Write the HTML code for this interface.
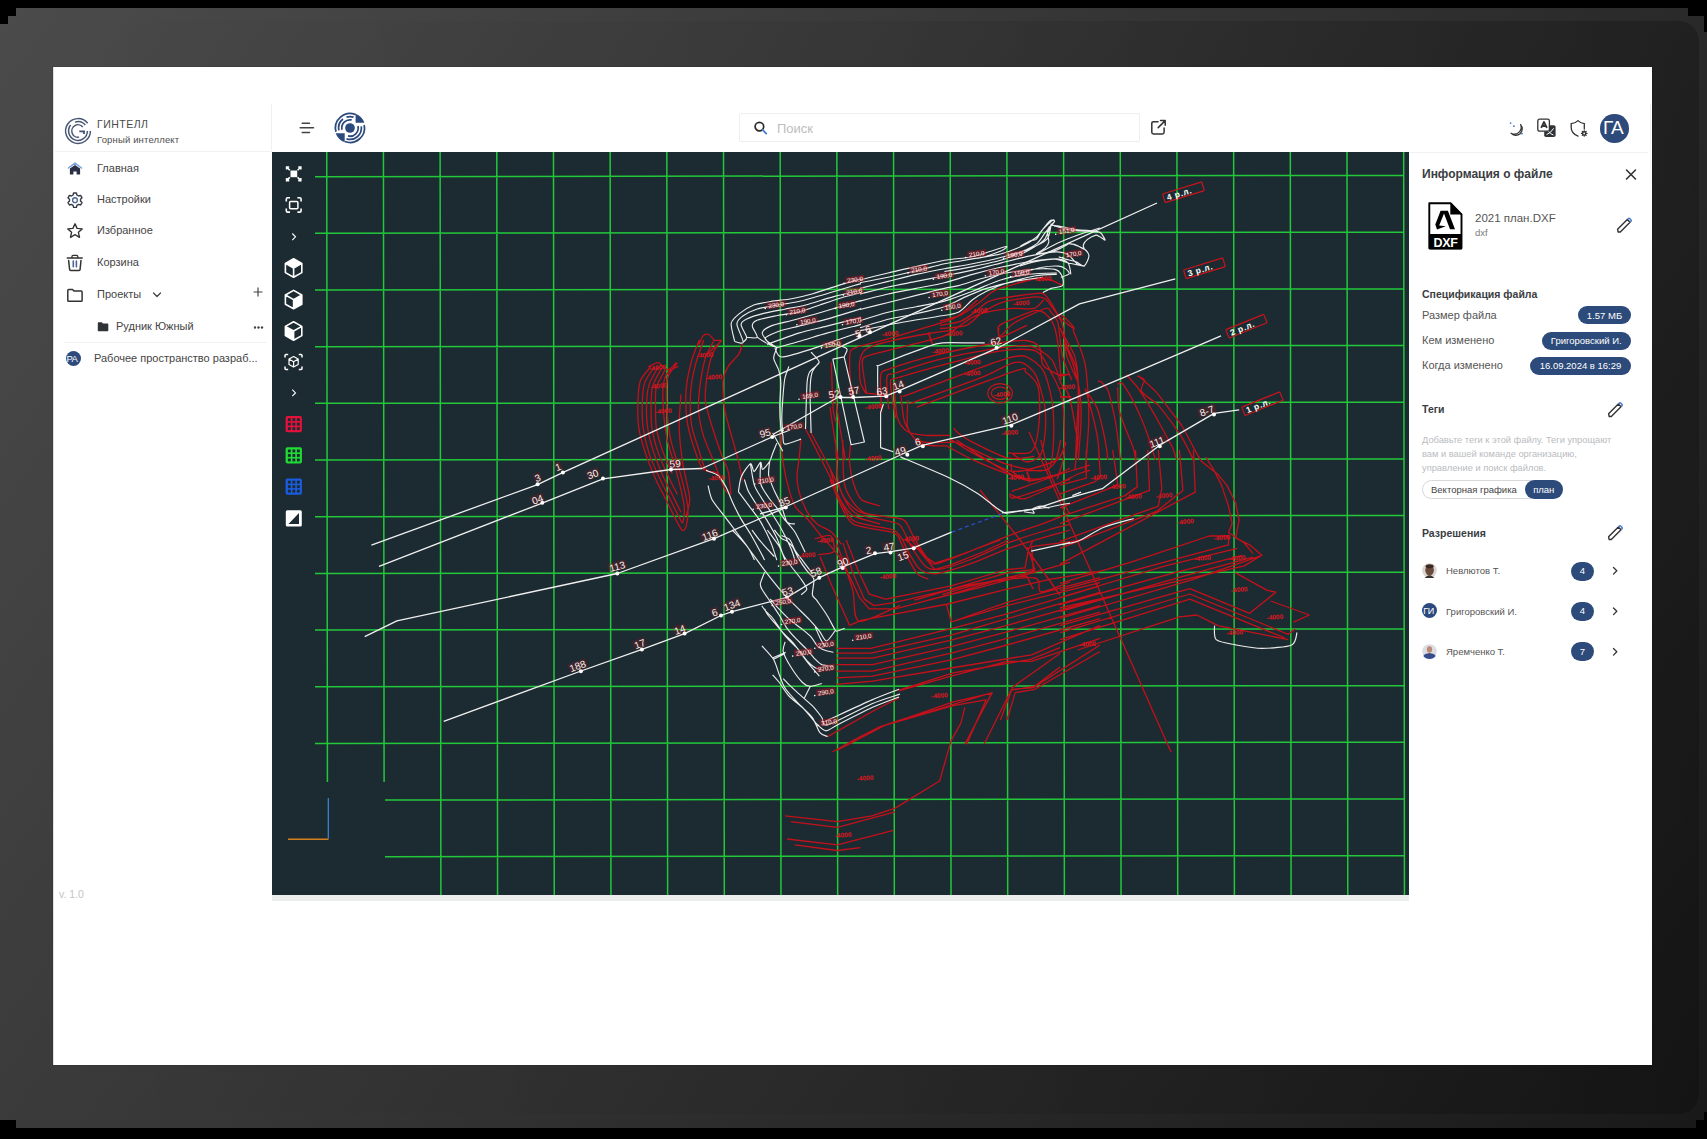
<!DOCTYPE html>
<html><head><meta charset="utf-8">
<style>
*{margin:0;padding:0;box-sizing:border-box}
html,body{width:1707px;height:1139px;overflow:hidden;background:#000;font-family:"Liberation Sans",sans-serif;position:relative}
#frame{position:absolute;left:0;top:0;width:1707px;height:1139px;background:linear-gradient(126.3deg,#4b4b4b 0%,#191919 100%);clip-path:polygon(16px 8px,1688px 8px,1688px 16px,1704px 16px,1704px 32px,1707px 32px,1707px 1112px,1704px 1112px,1704px 1120px,1696px 1120px,1696px 1128px,16px 1128px,16px 1120px,0 1120px,0 24px,8px 24px,8px 16px,16px 16px)}
#finner{position:absolute;left:8px;top:21px;width:1691px;height:1093px;border-radius:20px;background:linear-gradient(90deg,rgba(0,0,0,0) 0%,rgba(0,0,0,.05) 50%,rgba(0,0,0,.22) 100%)}
#screen{position:absolute;left:53px;top:67px;width:1599px;height:998px;background:#fff;box-shadow:0 0 0 1px rgba(0,0,0,.08),inset 1px 0 0 rgba(0,0,0,.12)}
.a{position:absolute}
.t{position:absolute;white-space:nowrap;line-height:1}
svg{position:absolute;overflow:visible}
</style></head><body>
<div id="frame"></div><div id="finner"></div>
<div id="screen"></div>
<!-- sidebar -->
<div class="a" style="left:55px;top:151px;width:216px;height:1px;background:#f0f1f2"></div>
<div class="a" style="left:271px;top:104px;width:1px;height:48px;background:#f0f1f2"></div>
<svg style="left:63.9px;top:117.3px" width="28" height="28" viewBox="0 0 28 28" fill="none" stroke="#475572" stroke-width="1.45" stroke-linecap="butt">
 <path d="M23.68 6.25A12.4 12.4 0 1 0 26.40 14.00M10.99 5.10A9.4 9.4 0 0 1 21.31 8.08M6.69 8.08A9.4 9.4 0 1 0 23.40 14.00M18.78 10.05A6.2 6.2 0 1 0 15.12 20.10"/>
 <path d="M15.3 14.4H21 M19.9 14.4V17" stroke-width="1.9"/>
</svg>
<div class="t" style="left:97px;top:119px;font-size:10.5px;color:#4a4a4a;letter-spacing:0.5px">ГИНТЕЛЛ</div>
<div class="t" style="left:97px;top:135px;font-size:9.5px;color:#4e4e4e;letter-spacing:0.15px">Горный интеллект</div>
<svg style="left:66px;top:161px" width="18" height="16" viewBox="0 0 18 16">
 <path d="M2.4 7 L9 2.1 L15.6 7" fill="none" stroke="#7aa2e0" stroke-width="1.5" stroke-linejoin="round" stroke-linecap="round"/>
 <path d="M3.9 7.6 L9 3.9 L14.1 7.6 V13.6 H10.6 V10.4 H7.4 V13.6 H3.9 Z" fill="#2a2f45"/>
</svg>
<svg style="left:66px;top:191px" width="18" height="18" viewBox="0 0 18 18" fill="none" stroke="#333a44" stroke-width="1.4" stroke-linejoin="round">
 <path d="M7.6 2.3 H10.4 L10.9 4.3 L12.6 5.3 L14.6 4.7 L16 7.1 L14.5 8.6 V10.4 L16 11.9 L14.6 14.3 L12.6 13.7 L10.9 14.7 L10.4 16.7 H7.6 L7.1 14.7 L5.4 13.7 L3.4 14.3 L2 11.9 L3.5 10.4 V8.6 L2 7.1 L3.4 4.7 L5.4 5.3 L7.1 4.3 Z" transform="translate(0,-0.3)"/>
 <circle cx="9" cy="9.2" r="2.4" stroke="#4f6a94"/>
</svg>
<svg style="left:66px;top:222px" width="18" height="18" viewBox="0 0 18 18" fill="none" stroke="#333" stroke-width="1.4" stroke-linejoin="round">
 <path d="M9 1.8 L11.1 6.4 L16.2 6.9 L12.4 10.3 L13.5 15.3 L9 12.7 L4.5 15.3 L5.6 10.3 L1.8 6.9 L6.9 6.4 Z"/>
</svg>
<svg style="left:66px;top:254px" width="18" height="18" viewBox="0 0 18 18" fill="none" stroke="#333" stroke-width="1.5" stroke-linecap="round" stroke-linejoin="round">
 <path d="M1.3 3.9 H16.2"/>
 <path d="M6 3.7 V2.5 Q6 1.3 7.2 1.3 H10.6 Q11.8 1.3 11.8 2.5 V3.7" stroke-width="1.3"/>
 <path d="M2.6 6.4 L3.6 15.3 Q3.8 16.6 5.1 16.6 H12.6 Q13.9 16.6 14.1 15.3 L15 6.4"/>
 <path d="M7.3 7.1 V12.8 M10.4 7.1 V12.8" stroke="#4d6592" stroke-width="1.6"/>
</svg>
<svg style="left:66px;top:288px" width="18" height="15" viewBox="0 0 18 15" fill="none" stroke="#333" stroke-width="1.5" stroke-linejoin="round">
 <path d="M1.8 2.4 Q1.8 1.5 2.7 1.5 H6.5 L8.2 3.1 H15.2 Q16.1 3.1 16.1 4 V12.4 Q16.1 13.3 15.2 13.3 H2.7 Q1.8 13.3 1.8 12.4 Z"/>
</svg>
<div class="t" style="left:97px;top:163px;font-size:11px;color:#444">Главная</div>
<div class="t" style="left:97px;top:194px;font-size:11px;color:#444">Настройки</div>
<div class="t" style="left:97px;top:225px;font-size:11px;color:#444">Избранное</div>
<div class="t" style="left:97px;top:257px;font-size:11px;color:#444">Корзина</div>
<div class="t" style="left:97px;top:289px;font-size:11px;color:#444">Проекты</div>
<svg style="left:152px;top:291px" width="10" height="8" viewBox="0 0 10 8" fill="none" stroke="#444" stroke-width="1.3" stroke-linecap="round" stroke-linejoin="round"><path d="M1.5 2 L5 5.5 L8.5 2"/></svg>
<svg style="left:252px;top:286px" width="12" height="12" viewBox="0 0 12 12" fill="none" stroke="#444" stroke-width="1.2"><path d="M6 1.5 V10.5 M1.5 6 H10.5"/></svg>
<svg style="left:97px;top:321px" width="12" height="11" viewBox="0 0 12 11"><path d="M0.8 2 Q0.8 1.3 1.5 1.3 H4.8 L6 2.5 H10.6 Q11.3 2.5 11.3 3.2 V9.5 Q11.3 10.2 10.6 10.2 H1.5 Q0.8 10.2 0.8 9.5 Z" fill="#2f3236"/></svg>
<div class="t" style="left:116px;top:321px;font-size:11px;color:#444">Рудник Южный</div>
<svg style="left:253px;top:325px" width="12" height="5" viewBox="0 0 12 5" fill="#444"><circle cx="2" cy="2.5" r="1.2"/><circle cx="5.5" cy="2.5" r="1.2"/><circle cx="9" cy="2.5" r="1.2"/></svg>
<div class="a" style="left:64px;top:342px;width:203px;height:1px;background:#f0f1f2"></div>
<div class="a" style="left:65.5px;top:350.5px;width:15.5px;height:15.5px;border-radius:50%;background:#2c4a7e"></div>
<div class="t" style="left:66.5px;top:354px;font-size:9.5px;color:#fff;letter-spacing:-0.6px">РА</div>
<div class="t" style="left:94px;top:353px;font-size:11px;color:#444">Рабочее пространство разраб...</div>
<div class="t" style="left:59px;top:889px;font-size:10.5px;color:#c4c4c4">v. 1.0</div>
<!-- topbar -->
<svg style="left:298px;top:120px" width="18" height="16" viewBox="0 0 18 16" stroke="#444" stroke-width="1.5" stroke-linecap="round"><path d="M4.2 3.3 H11.5 M2.2 7.7 H15.5 M4.2 12.4 H11.5"/></svg>
<svg style="left:334.4px;top:111.8px" width="32" height="32" viewBox="0 0 32 32" fill="none" stroke="#2c4a7e" stroke-width="1.75">
 <path d="M21.6 10.7V1.76A15.3 15.3 0 0 1 30.35 10.7Z M10.7 21.3V30.35A15.3 15.3 0 0 1 1.65 21.3Z" fill="#2c4a7e" stroke="none"/>
 <path d="M21.67 2.65A14.5 14.5 0 0 0 1.99 19.75M30.18 12.99A14.5 14.5 0 0 1 10.80 29.54M8.98 7.02A11.4 11.4 0 0 0 4.85 18.37M12.48 5.16A11.4 11.4 0 0 1 19.52 5.16M27.29 14.41A11.4 11.4 0 0 1 12.48 26.84M17.70 7.98A8.2 8.2 0 0 0 7.98 17.70M23.96 14.02A8.2 8.2 0 0 1 14.02 23.96"/>
 <circle cx="16" cy="16" r="4.85" fill="#2c4a7e" stroke="none"/>
</svg>
<div class="a" style="left:739px;top:113px;width:401px;height:29px;border:1px solid #eeeeee;border-radius:2px"></div>
<svg style="left:752px;top:120px" width="18" height="16" viewBox="0 0 18 16" fill="none" stroke-linecap="round"><circle cx="7.4" cy="6.6" r="4.3" stroke="#2b2b2b" stroke-width="1.7"/><path d="M10.8 10 L14.2 13.6" stroke="#3e7bd6" stroke-width="1.8"/></svg>
<div class="t" style="left:777px;top:122px;font-size:13px;color:#bdbdbd">Поиск</div>
<svg style="left:1150px;top:119px" width="17" height="17" viewBox="0 0 17 17" fill="none" stroke="#333" stroke-width="1.5" stroke-linecap="round" stroke-linejoin="round"><path d="M8 2.7 H3.5 Q1.8 2.7 1.8 4.4 V13.3 Q1.8 15 3.5 15 H12.4 Q14.1 15 14.1 13.3 V9"/><path d="M8.2 8.6 L15.2 1.6 M10.5 1.6 H15.2 V6.3"/></svg>
<svg style="left:1507px;top:120px" width="18" height="17" viewBox="0 0 18 17" fill="none"><path d="M13.6 4.6 A6 6 0 0 1 4 13.2 A6.8 6.8 0 0 0 13.6 4.6 Z" stroke="#333" stroke-width="1.2" stroke-linejoin="round"/><circle cx="3.6" cy="3.1" r="0.9" fill="#4a7bd0"/><circle cx="6.9" cy="6.2" r="0.9" fill="#4a7bd0"/><circle cx="15" cy="13.7" r="0.9" fill="#4a7bd0"/></svg>
<svg style="left:1536px;top:118px" width="22" height="21" viewBox="0 0 22 21"><rect x="8.2" y="7.3" width="11.4" height="11.7" rx="1.8" fill="#2f3338"/><path d="M10.6 16.6 Q14.6 15.2 17.6 10.4 M12.2 13 Q14.8 16.4 17.4 17" stroke="#fff" stroke-width="1" fill="none"/><rect x="1.8" y="1.2" width="11.6" height="12" rx="1.8" fill="#fff" stroke="#333" stroke-width="1.3"/><path d="M5.2 9.9 L8 4 L10.9 9.9 M6.2 8 H9.9" stroke="#333" stroke-width="1.8" fill="none" stroke-linejoin="round"/></svg>
<svg style="left:1569px;top:119px" width="20" height="19" viewBox="0 0 20 19" fill="none" stroke="#333" stroke-width="1.3" stroke-linecap="round"><path d="M15.3 10 V4.6 Q11.6 4.2 9 1.6 Q6.4 4.2 2.2 4.6 V8.6 Q2.2 14.6 9 17.2"/><circle cx="15.2" cy="14.4" r="1.6" stroke-width="1.4"/><path d="M15.2 11.6 V12.4 M15.2 16.4 V17.2 M12.4 14.4 H13.2 M17.2 14.4 H18 M13.2 12.4 L13.8 13 M16.6 15.8 L17.2 16.4 M17.2 12.4 L16.6 13 M13.8 15.8 L13.2 16.4" stroke-width="1.1"/></svg>
<div class="a" style="left:1600px;top:114px;width:28.5px;height:28.5px;border-radius:50%;background:#2d4a7a"></div>
<div class="t" style="left:1603px;top:118px;font-size:19px;color:#fff;letter-spacing:-1px">ГА</div>
<div class="a" style="left:1409px;top:152px;width:239px;height:1px;background:#f0f1f2"></div>
<div class="a" style="left:1650px;top:104px;width:1px;height:100px;background:linear-gradient(#eef0f1,rgba(238,240,241,0))"></div>
<!-- canvas -->
<div class="a" style="left:272px;top:152px;width:1137px;height:743px;background:#1c2b31"></div>
<div class="a" style="left:272px;top:895px;width:1137px;height:6px;background:#eceeee"></div>
<svg width="1707" height="1139" style="left:0;top:0" viewBox="0 0 1707 1139"><defs><clipPath id="cv"><rect x="272" y="152" width="1137" height="743"/></clipPath></defs><g clip-path="url(#cv)"><path d="M326.75 152L327.41 782M383.43 152L384.09 782M440.11 152L440.89 895M496.79 152L497.57 895M553.47 152L554.25 895M610.15 152L610.93 895M666.83 152L667.61 895M723.51 152L724.29 895M780.19 152L780.97 895M836.87 152L837.65 895M893.55 152L894.33 895M950.23 152L951.01 895M1006.91 152L1007.69 895M1063.59 152L1064.37 895M1120.27 152L1121.05 895M1176.95 152L1177.73 895M1233.63 152L1234.41 895M1290.31 152L1291.09 895M1346.99 152L1347.77 895M1403.67 152L1404.45 895M315 176.64L1404 175.39M315 233.32L1404 232.07M315 290.00L1404 288.75M315 346.68L1404 345.43M315 403.36L1404 402.11M315 460.04L1404 458.79M315 516.72L1404 515.47M315 573.40L1404 572.15M315 630.08L1404 628.83M315 686.76L1404 685.51M315 743.44L1404 742.19M385 800.04L1404 798.87M385 856.72L1404 855.55" stroke="#22c83a" stroke-width="1.5" fill="none"/><path d="M651.1 366.3 C649.7 368.2 642.3 375.7 640.5 380.4 C638.8 385.1 638.1 395.1 637.9 401.5 C637.7 407.8 637.7 420.8 638.8 427.8 C639.8 434.8 643.5 447.1 645.8 454.1 C648.1 461.2 653.5 474.2 656.3 480.5 C659.1 486.8 664.1 495.9 666.9 501.5 C669.7 507.2 675.3 518.8 677.4 522.6 C679.5 526.5 681.5 530.0 682.7 530.5 C683.8 531.0 685.5 529.1 686.2 526.1 C686.9 523.2 688.2 513.5 687.9 508.6 C687.7 503.7 685.8 495.3 684.4 489.3 C683.0 483.2 679.3 469.7 677.4 462.9 C675.5 456.1 671.8 445.4 670.4 438.3 C669.0 431.3 667.3 418.0 666.9 410.2 C666.4 402.5 666.2 385.8 666.9 380.4 C667.6 375.0 670.7 372.2 672.1 369.9 C673.5 367.5 676.7 363.8 677.4 362.8M654.6 366.3 C653.3 368.4 646.6 377.5 644.9 382.1 C643.3 386.8 642.5 395.4 642.3 401.5 C642.1 407.5 642.2 420.8 643.2 427.8 C644.1 434.8 647.1 447.3 649.3 454.1 C651.5 460.9 657.0 472.6 659.9 478.7 C662.7 484.8 667.8 494.6 670.4 499.8 C673.0 504.9 677.5 514.3 679.2 517.3 C680.8 520.4 682.0 523.8 682.7 522.6 C683.4 521.4 684.7 513.0 684.4 508.6 C684.2 504.1 682.3 495.3 680.9 489.3 C679.5 483.2 675.8 469.7 673.9 462.9 C672.0 456.1 668.3 445.4 666.9 438.3 C665.5 431.3 663.8 417.5 663.4 410.2 C662.9 403.0 662.7 389.0 663.4 383.9 C664.1 378.7 666.6 373.9 668.6 371.6 C670.6 369.3 677.0 367.0 678.3 366.3M658.1 367.2 C656.9 369.4 650.8 379.3 649.3 383.9 C647.8 388.5 646.9 395.6 646.7 401.5 C646.4 407.3 646.6 421.0 647.6 427.8 C648.5 434.6 651.6 445.8 653.7 452.4 C655.8 458.9 660.7 470.9 663.4 477.0 C666.1 483.0 671.6 493.4 673.9 498.0 C676.2 502.7 680.0 510.2 680.9 512.1M661.6 368.1 C660.4 370.4 654.2 381.0 652.8 385.7 C651.4 390.3 651.2 397.6 651.1 403.2 C651.0 408.8 651.0 421.2 651.9 427.8 C652.9 434.4 656.0 446.1 658.1 452.4 C660.2 458.7 665.2 469.6 667.8 475.2 C670.3 480.8 676.1 491.9 677.4 494.5M665.1 369.9 C663.9 372.2 657.6 382.7 656.3 387.4 C655.1 392.1 655.5 399.6 655.5 405.0 C655.5 410.4 655.4 421.7 656.3 427.8 C657.3 433.9 660.4 444.5 662.5 450.6 C664.6 456.7 670.9 470.4 672.1 473.5M680.9 394.4 C680.7 398.9 678.9 418.7 679.2 427.8 C679.4 436.9 681.3 453.5 682.7 462.9 C684.1 472.3 689.2 491.0 689.7 498.0 C690.2 505.1 686.7 513.3 686.2 515.6M703.7 340.0 C702.6 343.5 696.7 359.3 695.0 366.3 C693.2 373.4 691.0 385.0 690.6 392.7 C690.1 400.4 690.4 416.8 691.5 424.3 C692.5 431.8 696.6 442.8 698.5 448.9 C700.4 455.0 703.6 466.9 705.5 469.9 C707.4 473.0 710.9 471.2 712.5 471.7 C714.2 472.2 717.1 473.2 717.8 473.5M714.3 340.0 C713.1 342.3 707.4 351.7 705.5 357.6 C703.6 363.4 701.2 376.9 700.2 383.9 C699.3 390.9 698.0 403.2 698.5 410.2 C698.9 417.3 701.6 429.6 703.7 436.6 C705.9 443.6 711.5 455.9 714.3 462.9 C717.1 469.9 722.7 485.0 724.8 489.3 C726.9 493.5 729.4 493.8 730.1 494.5M721.3 340.0 C720.1 341.9 714.4 349.4 712.5 354.0 C710.7 358.7 708.2 368.8 707.3 375.1 C706.3 381.4 704.8 394.4 705.5 401.5 C706.2 408.5 710.4 420.8 712.5 427.8 C714.6 434.8 719.2 448.3 721.3 454.1 C723.4 460.0 727.0 466.3 728.3 471.7 C729.6 477.1 730.6 491.5 731.0 494.5M742.4 343.5 C741.9 344.9 740.7 351.0 738.9 354.0 C737.0 357.1 730.4 362.8 728.3 366.3 C726.2 369.9 723.5 374.5 723.1 380.4 C722.6 386.2 723.6 402.7 724.8 410.2 C726.0 417.7 730.0 429.6 731.8 436.6 C733.7 443.6 737.5 457.1 738.9 462.9 C740.3 468.8 741.9 478.1 742.4 480.5M699.4 340.0 C698.3 342.8 693.2 354.5 691.5 361.1 C689.7 367.6 686.8 381.2 686.2 389.2 C685.6 397.1 686.1 413.3 687.1 420.8 C688.0 428.3 691.2 439.0 693.2 445.4 C695.2 451.7 700.1 464.9 702.0 468.2 C703.9 471.5 706.6 469.7 707.3 469.9M648.3 366.9 C649.6 366.3 655.5 362.3 658.1 362.6 C660.7 363.0 665.5 369.7 668.0 369.7 C670.4 369.7 675.3 363.6 676.4 362.6M698.9 344.4 C699.5 343.2 701.8 337.2 703.1 335.9 C704.4 334.6 707.2 334.0 708.7 334.5 C710.2 335.1 712.7 339.3 714.4 340.1 C716.0 341.0 721.4 339.9 721.4 340.8 C721.4 341.8 716.4 345.2 714.4 347.2 C712.3 349.1 707.0 354.5 705.9 355.6M780.0 431.6 C780.4 435.8 781.9 455.2 783.2 463.2 C784.4 471.2 787.8 485.7 789.5 491.6 C791.2 497.5 793.3 503.6 795.8 507.4 C798.3 511.2 805.1 516.2 808.4 520.0 C811.8 523.8 816.8 530.7 821.1 535.8 C825.3 540.8 835.8 550.7 840.0 557.9 C844.2 565.1 850.1 581.1 852.6 589.5 C855.2 597.9 852.6 618.9 858.9 621.1 C865.3 623.2 894.5 607.4 900.0 605.3M814.7 538.9 C816.8 538.5 828.0 534.1 830.5 535.8 C833.1 537.5 835.4 549.1 833.7 551.6 C832.0 554.1 820.0 554.3 817.9 554.7M851.1 398.4 C850.9 392.8 849.1 363.0 849.7 356.2 C850.2 349.5 850.4 350.1 855.3 347.8 C860.2 345.6 876.5 342.2 886.2 339.4 C896.0 336.6 919.4 329.5 928.4 326.7 C937.4 323.9 948.5 320.7 953.7 318.3 C959.0 315.8 964.6 310.9 967.8 308.4 C971.0 306.0 976.3 301.1 977.6 300.0M866.6 394.2 C866.0 390.1 862.3 368.3 862.3 363.3 C862.3 358.2 862.4 358.1 866.6 356.2 C870.7 354.4 883.1 351.8 893.3 349.2 C903.4 346.6 934.0 339.4 942.5 336.6 C950.9 333.7 952.8 330.6 956.5 328.1 C960.3 325.7 966.8 320.3 970.6 318.3 C974.3 316.2 979.0 314.0 984.7 312.7 C990.3 311.3 1006.2 309.0 1012.8 308.4 C1019.3 307.9 1029.7 309.6 1033.9 308.4 C1038.0 307.3 1042.4 301.1 1043.7 300.0M998.7 328.1 C998.7 329.1 998.2 334.0 998.7 335.1 C999.3 336.3 999.2 337.9 1002.9 336.6 C1006.7 335.2 1023.6 326.8 1026.8 325.3M928.4 332.3 L931.2 342.2M830.0 406.9 C830.4 409.5 831.7 419.4 832.8 426.5 C833.9 433.6 837.7 455.7 838.4 460.1M835.6 398.4 C836.2 402.2 838.5 418.3 839.8 426.5 C841.2 434.8 844.7 455.7 845.5 460.1M865.8 393.2 C865.1 391.8 861.4 386.9 860.5 382.7 C859.7 378.5 859.0 366.0 859.7 361.6 C860.4 357.2 862.4 351.9 865.8 349.3 C869.2 346.7 876.7 344.4 885.1 342.3 C893.5 340.2 919.6 335.1 929.0 333.5 C938.4 331.9 951.8 330.5 955.3 330.0M865.8 393.2 L885.1 395.0M881.6 412.5 C881.5 407.6 879.6 381.5 880.7 375.6 C881.9 369.8 882.8 371.4 890.4 368.6 C898.0 365.8 924.4 357.9 937.8 354.6 C951.1 351.3 978.7 345.9 990.4 344.0 C1002.2 342.2 1019.0 340.1 1025.6 340.5 C1032.1 341.0 1037.3 344.3 1039.6 347.6 C1041.9 350.8 1040.3 361.4 1043.1 365.1 C1045.9 368.9 1057.2 374.5 1060.7 375.6 C1064.2 376.8 1068.3 374.1 1069.5 373.9M888.6 409.0 C888.4 404.8 885.9 382.2 886.9 377.4 C887.8 372.6 888.9 375.4 895.6 373.0 C902.4 370.7 925.1 363.0 937.8 359.8 C950.4 356.7 978.3 351.2 990.4 349.3 C1002.6 347.4 1020.9 344.4 1029.1 345.8 C1037.3 347.2 1047.7 354.9 1051.9 359.8 C1056.1 364.8 1058.3 377.8 1060.7 382.7 C1063.0 387.6 1067.1 388.5 1069.5 396.7 C1071.8 404.9 1077.1 437.8 1078.2 444.1M895.6 417.8 C894.9 413.1 889.9 388.1 890.4 382.7 C890.8 377.3 890.5 380.2 899.2 377.4 C907.8 374.6 942.0 365.1 955.3 361.6 C968.7 358.1 988.5 352.5 999.2 351.1 C1010.0 349.7 1029.1 348.0 1036.1 351.1 C1043.1 354.1 1048.4 367.3 1051.9 373.9 C1055.4 380.4 1060.8 389.7 1062.4 400.2 C1064.1 410.8 1064.9 442.4 1064.2 452.9 C1063.5 463.4 1058.1 475.7 1057.2 479.2M902.7 396.7 C912.0 393.2 958.8 375.5 972.9 370.4 C986.9 365.2 1001.0 360.0 1008.0 358.1 C1015.0 356.2 1020.9 354.7 1025.6 356.3 C1030.2 358.0 1039.6 364.5 1043.1 370.4 C1046.6 376.2 1050.5 391.6 1051.9 400.2 C1053.3 408.9 1053.9 426.4 1053.7 435.3 C1053.4 444.2 1052.0 462.3 1050.1 466.9 C1048.3 471.6 1042.9 470.0 1039.6 470.4 C1036.3 470.9 1027.4 470.4 1025.6 470.4M909.7 403.7 C919.3 400.2 968.1 382.8 981.7 377.4 C995.2 372.0 1005.9 365.2 1011.5 363.4 C1017.1 361.5 1020.5 361.7 1023.8 363.4 C1027.1 365.0 1033.3 369.8 1036.1 375.6 C1038.9 381.5 1043.7 399.3 1044.9 407.2 C1046.0 415.2 1045.6 428.8 1044.9 435.3 C1044.2 441.9 1042.2 452.9 1039.6 456.4 C1037.0 459.9 1029.3 462.1 1025.6 461.7 C1021.8 461.2 1013.4 454.1 1011.5 452.9M916.7 407.2 C930.1 402.3 1002.3 375.1 1016.8 370.4 C1031.3 365.7 1022.8 370.0 1025.6 372.1 C1028.4 374.2 1036.0 380.6 1037.9 386.2 C1039.7 391.8 1039.8 406.8 1039.6 414.3 C1039.4 421.8 1037.5 437.2 1036.1 442.4 C1034.7 447.5 1032.8 451.5 1029.1 452.9 C1025.3 454.3 1010.8 452.9 1008.0 452.9M893.9 382.7 C894.4 387.4 895.5 411.2 897.4 417.8 C899.3 424.3 904.2 429.5 907.9 431.8 C911.7 434.2 919.9 434.9 925.5 435.3 C931.1 435.8 946.8 435.3 950.1 435.3M900.9 395.0 C901.4 398.5 902.6 415.4 904.4 421.3 C906.3 427.1 911.9 436.0 915.0 438.8 C918.0 441.7 922.1 441.9 927.2 442.4 C932.4 442.8 950.1 442.4 953.6 442.4M907.9 400.2 C907.9 404.0 906.1 422.5 907.9 428.3 C909.8 434.2 916.8 441.8 922.0 444.1 C927.1 446.5 943.3 445.6 946.6 445.9M953.6 428.3 C954.3 429.0 956.3 431.7 958.8 433.6 C961.4 435.5 966.3 439.1 972.9 442.4 C979.4 445.6 999.8 456.3 1008.0 458.2 C1016.2 460.0 1030.8 456.6 1034.3 456.4M950.1 438.8 C952.6 440.5 961.7 446.9 969.4 451.1 C977.1 455.4 1000.5 467.9 1008.0 470.4 C1015.5 473.0 1023.2 470.4 1025.6 470.4M946.6 445.9 C950.1 447.7 964.0 455.9 972.9 459.9 C981.8 463.9 1005.1 473.1 1013.3 475.7 C1021.5 478.3 1029.2 479.2 1034.3 479.2 C1039.5 479.2 1049.6 476.2 1051.9 475.7M1011.5 495.0 C1013.4 495.5 1019.0 500.2 1025.6 498.5 C1032.1 496.9 1053.7 486.0 1060.7 482.7 C1067.7 479.5 1074.3 475.6 1078.2 474.0 C1082.1 472.3 1088.4 470.9 1090.0 470.4M1011.5 491.5 C1018.1 489.2 1050.2 477.5 1060.7 474.0 C1071.1 470.4 1086.1 466.4 1090.0 465.2M1027.3 470.4 L1029.1 482.7M1025.6 470.4 C1029.8 469.0 1051.8 463.7 1057.2 459.9 C1062.5 456.2 1064.8 444.7 1065.9 442.4M1060.7 330.0 C1062.5 333.5 1072.4 349.3 1074.7 356.3 C1077.1 363.4 1077.8 372.1 1078.2 382.7 C1078.7 393.2 1078.7 423.6 1078.2 435.3 C1077.8 447.0 1075.2 465.8 1074.7 470.4M1073.0 330.0 C1074.6 334.7 1083.1 353.4 1085.3 365.1 C1087.4 376.8 1088.8 403.7 1088.8 417.8 C1088.8 431.8 1085.7 463.4 1085.3 470.4M929.0 333.5 L932.5 344.0M1060.7 396.7 L1071.2 396.7M842.7 440.0 C842.8 445.6 842.9 474.3 844.1 482.2 C845.2 490.1 848.3 494.9 851.1 499.1 C853.9 503.2 858.6 510.5 865.1 513.1 C871.7 515.7 894.7 517.2 900.3 518.7 C905.9 520.2 905.5 521.7 907.3 524.4 C909.2 527.0 911.5 533.7 914.4 538.4 C917.2 543.1 925.4 556.1 928.4 559.5 C931.4 562.9 931.2 564.9 936.9 563.7 C942.5 562.6 960.5 555.0 970.6 551.1 C980.7 547.1 1003.4 537.8 1012.8 534.2 C1022.1 530.6 1033.3 527.2 1040.9 524.4 C1048.5 521.5 1066.1 514.6 1070.0 513.1M835.6 440.0 C836.0 445.6 836.9 473.7 838.4 482.2 C839.9 490.6 844.2 499.0 846.9 503.3 C849.5 507.6 851.6 511.9 858.1 514.5 C864.7 517.1 890.1 520.9 896.1 523.0 C902.1 525.0 901.0 526.8 903.1 530.0 C905.2 533.2 908.5 542.0 911.5 546.9 C914.5 551.7 921.9 563.5 925.6 566.5 C929.4 569.5 933.7 570.3 939.7 569.3 C945.7 568.4 960.8 563.3 970.6 559.5 C980.3 555.8 1002.5 545.2 1012.8 541.2 C1023.1 537.3 1040.3 532.2 1047.9 530.0 C1055.6 527.7 1067.1 525.1 1070.0 524.4M830.0 468.1 C831.1 471.9 835.6 489.5 838.4 496.2 C841.2 503.0 847.5 515.0 851.1 518.7 C854.7 522.5 859.5 522.9 865.1 524.4 C870.8 525.9 888.4 528.1 893.3 530.0 C898.1 531.9 899.6 535.4 901.7 538.4 C903.8 541.4 906.3 548.4 908.7 552.5 C911.2 556.6 916.2 566.5 920.0 569.3 C923.7 572.2 930.1 574.3 936.9 573.6 C943.6 572.8 960.5 567.3 970.6 563.7 C980.7 560.2 999.5 551.4 1012.8 546.9 C1026.0 542.4 1062.4 532.2 1070.0 530.0M830.0 479.4 C831.5 482.9 838.1 500.1 841.2 506.1 C844.4 512.1 847.0 520.8 853.9 524.4 C860.8 527.9 887.1 530.5 893.3 532.8 C899.5 535.0 898.4 538.0 900.3 541.2 C902.2 544.4 905.1 552.4 907.3 556.7 C909.6 561.0 914.4 570.6 917.2 573.6 C920.0 576.6 926.9 578.4 928.4 579.2M949.5 440.0 C952.3 441.1 963.1 445.2 970.6 448.4 C978.1 451.6 996.4 460.9 1005.7 463.9 C1015.1 466.9 1034.3 471.1 1040.9 470.9 C1047.5 470.7 1052.3 466.6 1055.0 462.5 C1057.6 458.4 1059.8 443.0 1060.6 440.0M956.5 440.0 C959.3 441.9 970.9 449.7 977.6 454.1 C984.4 458.4 1000.2 468.8 1007.2 472.3 C1014.1 475.9 1023.3 480.4 1029.6 480.8 C1036.0 481.1 1049.6 476.8 1055.0 475.1 C1060.3 473.5 1068.0 469.1 1070.0 468.1M1010.0 493.4 C1010.7 494.0 1007.6 499.5 1015.6 497.6 C1023.6 495.8 1062.7 481.8 1070.0 479.4M1011.4 463.9 C1011.6 465.0 1010.3 470.1 1012.8 472.3 C1015.2 474.6 1027.8 480.8 1029.6 480.8 C1031.5 480.8 1027.2 473.5 1026.8 472.3M914.4 600.1 C921.9 598.1 954.7 587.8 970.6 584.8 C986.5 581.8 1024.5 576.8 1033.9 577.8 C1043.2 578.7 1036.1 591.3 1040.9 591.8 C1045.7 592.4 1066.1 583.3 1070.0 582.0M928.4 600.1 C935.9 598.3 965.8 591.3 984.7 586.2 C1003.5 581.2 1058.6 565.5 1070.0 562.3M1026.8 546.9 C1027.8 549.5 1033.5 563.2 1033.9 566.5 C1034.2 569.9 1038.1 569.5 1029.6 572.2 C1021.2 574.8 982.2 583.2 970.6 586.2 C959.0 589.2 946.2 593.5 942.5 594.7M1040.9 440.0 C1041.8 443.7 1045.1 460.2 1047.9 468.1 C1050.7 476.0 1059.2 493.1 1062.0 499.1 C1064.8 505.0 1068.1 511.2 1069.0 513.1M1060.0 314.1 C1061.1 315.0 1066.6 319.2 1068.4 321.1 C1070.3 323.0 1073.5 327.0 1074.1 328.1 C1074.6 329.2 1072.8 329.3 1072.7 329.5M1060.0 328.1 C1061.1 330.9 1066.2 343.6 1068.4 349.2 C1070.7 354.8 1075.6 363.7 1076.9 370.3 C1078.2 376.9 1078.3 390.9 1078.3 398.4 C1078.3 405.9 1077.2 418.3 1076.9 426.5 C1076.5 434.8 1075.7 455.7 1075.5 460.1M1064.2 342.2 C1065.3 345.0 1070.6 356.7 1072.7 363.3 C1074.7 369.8 1078.6 383.9 1079.7 391.4 C1080.8 398.9 1081.3 410.3 1081.1 419.5 C1080.9 428.7 1078.7 454.7 1078.3 460.1M1085.3 388.6 C1085.7 389.9 1087.0 394.3 1088.1 398.4 C1089.2 402.5 1092.4 413.9 1093.7 419.5 C1095.1 425.1 1097.2 435.2 1098.0 440.6 C1098.7 446.0 1099.2 457.5 1099.4 460.1M1098.0 381.5 C1098.3 381.5 1099.5 380.4 1100.8 381.5 C1102.1 382.7 1106.3 386.8 1107.8 390.0 C1109.3 393.2 1110.9 400.6 1112.0 405.4 C1113.1 410.3 1115.1 419.2 1116.2 426.5 C1117.4 433.8 1119.9 455.7 1120.5 460.1M1085.3 390.0 C1086.8 392.2 1094.3 402.0 1096.6 406.9 C1098.8 411.7 1100.9 421.1 1102.2 426.5 C1103.5 432.0 1105.6 443.1 1106.4 447.6 C1107.1 452.1 1107.6 458.5 1107.8 460.1M1117.6 384.4 C1118.2 384.2 1120.2 381.5 1121.9 383.0 C1123.6 384.5 1128.0 391.7 1130.3 395.6 C1132.5 399.5 1136.5 407.4 1138.7 412.5 C1141.0 417.5 1144.9 427.2 1147.2 433.6 C1149.4 439.9 1154.5 456.6 1155.6 460.1M1117.6 387.2 C1117.8 390.2 1118.1 404.4 1119.1 409.7 C1120.0 414.9 1122.8 421.5 1124.7 426.5 C1126.5 431.6 1131.6 443.1 1133.1 447.6 C1134.6 452.1 1135.5 458.5 1135.9 460.1M1126.1 374.5 C1127.6 376.2 1134.1 382.9 1137.3 387.2 C1140.5 391.5 1146.8 401.6 1150.0 406.9 C1153.2 412.1 1158.2 421.1 1161.2 426.5 C1164.2 432.0 1170.4 443.1 1172.5 447.6 C1174.5 452.1 1176.1 458.5 1176.7 460.1M1137.3 375.9 C1138.3 376.5 1143.8 378.1 1144.4 380.1 C1144.9 382.2 1139.7 388.0 1141.5 391.4 C1143.4 394.8 1154.3 401.1 1158.4 405.4 C1162.5 409.8 1169.1 419.0 1172.5 423.7 C1175.9 428.4 1180.9 435.7 1183.7 440.6 C1186.5 445.5 1192.3 457.5 1193.6 460.1M1138.7 375.9 C1141.0 378.0 1151.5 386.9 1155.6 391.4 C1159.7 395.9 1166.1 405.0 1169.7 409.7 C1173.2 414.4 1179.1 421.5 1182.3 426.5 C1185.5 431.6 1191.1 443.1 1193.6 447.6 C1196.0 452.1 1199.7 458.5 1200.6 460.1M1060.0 374.5 L1069.8 374.5M1060.0 397.0 L1071.2 397.0M980.0 490.0 C985.3 496.7 1009.3 526.0 1020.0 540.0 C1030.7 554.0 1054.7 587.7 1060.0 595.0M940.0 321.1 C942.8 320.2 956.2 317.0 961.1 314.8 C966.0 312.5 972.7 307.3 976.9 304.2 C981.1 301.1 989.2 293.8 992.7 291.6 C996.2 289.4 997.6 289.1 1003.2 287.4 C1008.8 285.7 1028.5 279.9 1034.8 279.0 C1041.1 278.0 1046.9 279.2 1050.6 280.0 C1054.2 280.9 1060.6 284.6 1062.2 285.3M940.0 325.3 C942.8 324.7 956.2 323.1 961.1 321.1 C966.0 319.1 973.4 313.1 976.9 310.6 C980.4 308.0 983.9 303.8 987.4 302.1 C990.9 300.4 996.9 299.0 1003.2 297.9 C1009.5 296.8 1029.5 294.3 1034.8 293.7 C1040.1 293.1 1041.1 292.6 1043.2 293.7 C1045.3 294.8 1048.6 299.3 1050.6 302.1 C1052.6 304.9 1055.9 312.0 1058.0 314.8 C1060.1 317.6 1064.3 321.4 1066.4 323.2 C1068.5 325.0 1072.8 327.8 1073.8 328.5M940.0 328.5 C943.5 328.0 960.7 327.4 966.3 325.3 C972.0 323.2 977.2 315.8 982.1 312.7 C987.0 309.6 996.2 304.2 1003.2 302.1 C1010.2 300.0 1029.2 297.3 1034.8 296.9 C1040.4 296.4 1042.8 297.3 1045.3 299.0 C1047.9 300.7 1051.6 306.6 1053.8 309.5 C1055.9 312.5 1059.7 317.9 1061.1 321.1 C1062.5 324.3 1063.6 329.2 1064.3 333.7 C1065.0 338.2 1064.7 348.6 1066.4 354.8 C1068.1 361.0 1075.5 376.6 1076.9 380.0M997.9 327.4 C998.1 328.5 998.3 335.0 999.0 335.8 C999.7 336.7 1001.2 335.4 1003.2 333.7 C1005.2 332.0 1008.1 326.6 1013.7 323.2 C1019.3 319.8 1040.4 310.0 1045.3 308.5 C1050.2 306.9 1048.9 309.6 1050.6 311.6 C1052.3 313.6 1056.4 317.4 1058.0 323.2 C1059.5 329.0 1060.4 347.2 1062.2 354.8 C1064.0 362.4 1070.4 376.6 1071.7 380.0M997.9 327.4 C998.6 326.8 998.3 325.4 1003.2 323.2 C1008.1 321.0 1029.2 311.8 1034.8 310.6 C1040.4 309.3 1042.8 311.8 1045.3 313.7 C1047.9 315.7 1052.1 321.2 1053.8 325.3 C1055.4 329.4 1057.0 337.0 1058.0 344.3 C1059.0 351.6 1060.7 375.2 1061.1 380.0M801.0 439.1 C800.7 441.8 799.5 454.4 799.0 459.3 C798.5 464.1 797.0 471.1 797.0 475.5 C797.0 479.8 797.6 486.8 799.0 491.6 C800.3 496.5 804.6 507.5 807.1 511.8 C809.5 516.1 813.9 521.2 817.2 523.9 C820.4 526.6 828.1 529.3 831.3 532.0 C834.5 534.7 840.1 542.5 841.4 544.1M805.5 429.0 C807.6 433.0 817.5 452.0 821.2 459.3 C824.9 466.6 830.6 477.9 833.3 483.5 C836.0 489.2 838.7 497.4 841.4 501.7 C844.1 506.0 848.4 512.9 853.5 515.9 C858.7 518.8 876.5 522.9 880.0 523.9M811.1 433.0 C813.0 436.5 821.8 452.6 825.3 459.3 C828.8 466.0 834.7 478.1 837.4 483.5 C840.1 488.9 842.5 495.9 845.5 499.7 C848.4 503.5 855.0 509.7 859.6 511.8 C864.2 514.0 877.3 515.3 880.0 515.9M831.3 362.3 C831.4 366.1 832.1 384.1 832.3 390.6 C832.6 397.1 832.8 406.5 833.3 410.8 C833.9 415.1 836.0 421.3 836.4 422.9M850.5 445.2 C850.4 447.3 849.1 456.2 849.5 461.3 C849.9 466.4 851.9 478.4 853.5 483.5 C855.2 488.7 858.1 496.7 861.6 499.7 C865.1 502.7 877.5 504.9 880.0 505.8M1086.3 450.0 L1086.3 478.1 L1060.0 485.1M1098.6 450.0 L1100.4 476.3 L1095.1 481.6 L1060.0 493.9M1112.7 450.0 L1117.9 485.1 L1060.0 507.9M1135.5 450.0 L1137.2 486.9 L1125.0 495.6 L1060.0 516.7M1147.8 450.0 L1149.5 490.4 L1060.0 523.7M1158.3 450.0 L1161.8 488.6 L1158.3 506.2 L1060.0 541.3M1179.4 450.0 L1182.9 490.4 L1156.6 511.4 L1060.0 548.3M1193.4 450.0 L1195.2 492.1 L1060.0 564.1M1200.4 460.5 L1209.2 467.6 L1218.0 474.6 L1226.8 485.1 L1235.6 502.7 L1239.1 520.2 L1235.6 537.8 L1249.6 544.8 L1261.9 555.3 L1244.3 565.9 L1060.0 608.0M1205.7 457.0 L1214.5 471.1 L1221.5 485.1 L1228.5 506.2 L1232.1 523.7 L1228.5 532.5 L1244.3 543.0 L1253.1 553.6M1060.0 583.4 L1130.2 562.4 L1209.2 536.0 L1228.5 536.0 L1228.5 544.8 L1060.0 590.4M1060.0 597.5 L1165.3 565.9 L1237.3 548.3M1060.0 604.5 L1174.1 572.9 L1242.6 555.3M1060.0 611.5 L1182.9 576.4 L1253.1 557.1M1060.0 618.5 L1191.7 579.9 L1261.9 555.3M1060.0 625.6 L1189.9 588.7 L1249.6 613.3 L1275.9 592.2 L1267.2 590.4 L1235.6 572.9M1060.0 632.6 L1189.9 594.0 L1288.2 634.3 L1295.3 629.1M1060.0 639.6 L1189.9 599.2 L1284.7 637.9M1077.6 650.0 L1179.4 616.8 L1196.9 615.0 L1218.0 625.6 L1288.2 639.6M1270.7 601.0 L1309.3 615.0 L1293.5 622.1M1029.0 431.7 L1171.0 752.0M899.1 690.2 L953.2 672.8 L1030.4 659.3 L1060.0 647.7M827.6 736.6 L875.9 709.5 L899.1 697.9M832.4 752.0 L856.6 738.5 L879.8 726.9 L914.5 715.3 L953.2 701.8 L991.8 693.1 L964.8 744.3M837.3 750.1 L885.6 725.0 L953.2 705.7 L986.0 699.9 L966.7 744.3M964.8 707.6 L960.9 723.1 L951.2 740.4 L939.6 781.0 L895.2 808.1 L872.0 815.8 L837.3 821.6 L785.1 815.8M790.9 821.6 L837.3 827.4 L895.2 811.9M787.0 839.0 L837.3 844.8 L893.3 830.3M794.8 844.8 L837.3 850.5 L860.4 847.6M984.1 744.3 L1011.1 690.2 L1034.3 686.4 L1060.0 667.0M1011.1 688.3 L1060.0 653.5M820.0 556.4 L829.8 581.0 L849.5 625.3 L861.0 620.4 L948.0 604.0 L1007.0 589.2 L1049.7 579.4 L1100.0 571.2M836.4 543.3 L847.9 572.8 L859.4 597.4 L869.2 608.9 L895.5 608.9 L951.2 594.1 L1007.0 577.7 L1026.7 576.1 L1033.3 589.2M843.0 543.3 L852.8 572.8 L864.3 599.1 L874.1 605.6 L895.5 602.3 L951.2 589.2 L1007.0 572.8 L1033.3 569.5 L1031.6 546.6 L1082.5 540.0M846.2 540.0 L857.7 569.5 L869.2 594.1 L885.6 599.1 L951.2 585.9 L1007.0 569.5 L1025.1 567.9 L1028.3 549.8 L1033.3 540.0M905.3 540.0 L918.4 549.8 L926.6 559.7 L934.8 569.5 L951.2 564.6 L984.0 551.5 L1008.6 540.0M911.9 540.0 L925.0 556.4 L934.8 563.0 L951.2 558.0 L1000.4 540.0M946.3 604.0 L951.2 622.0 L1007.0 602.3 L1100.0 577.7M951.2 622.0 L1007.0 605.6 L1100.0 582.7M836.4 648.3 L870.9 648.3 L951.2 628.6 L1007.0 613.8 L1100.0 585.9M836.4 653.2 L870.9 653.2 L951.2 635.1 L1007.0 618.7 L1100.0 592.5M836.4 658.1 L872.5 658.1 L951.2 640.1 L1007.0 625.3 L1100.0 599.1M836.4 664.7 L872.5 664.7 L951.2 646.6 L1007.0 631.9 L1100.0 605.6M836.4 671.2 L872.5 671.2 L951.2 653.2 L1007.0 638.4 L1100.0 612.2M836.4 677.8 L872.5 676.2 L951.2 659.8 L1007.0 645.0 L1100.0 618.7M836.4 684.4 L872.5 681.1 L951.2 668.0 L1031.6 654.8 L1100.0 625.3M898.7 690.9 L951.2 676.2 L1007.0 661.4 L1031.6 661.4 L1100.0 638.4M1000.4 720.0 L1011.9 689.3 L1033.3 687.6 L1100.0 645.0M1007.0 720.0 L1015.2 692.6 L1034.9 689.3 L1100.0 651.5M902.0 720.0 L992.2 692.6 L977.5 720.0" stroke="#c4101a" stroke-width="1.3" fill="none" stroke-linejoin="round"/><ellipse cx="1000.1" cy="393.2" rx="8.8" ry="6.2" stroke="#c8141c" stroke-width="1.15" fill="none"/><ellipse cx="1000.1" cy="393.2" rx="12.3" ry="9.6" stroke="#c8141c" stroke-width="1.15" fill="none"/><path d="M734.7 341.5 C734.3 339.1 730.6 327.0 731.2 323.3 C731.9 319.5 736.7 315.9 739.7 313.4 C742.7 311.0 749.6 306.6 753.7 305.0 C757.9 303.4 765.5 302.3 770.6 301.5 C775.7 300.6 786.1 299.7 791.7 298.7 C797.3 297.6 806.2 295.6 812.8 293.7 C819.3 291.9 834.5 286.6 840.9 284.6 C847.3 282.6 858.3 279.6 861.0 278.8M734.7 341.5 C735.9 341.6 742.9 344.6 743.2 342.2 C743.5 339.9 736.9 327.4 736.9 324.0 C736.8 320.5 739.9 318.2 742.5 316.2 C745.1 314.3 751.9 310.7 756.5 309.2 C761.2 307.7 772.0 306.0 777.6 305.0 C783.3 304.0 792.2 303.0 798.7 301.5 C805.3 300.0 819.3 295.9 826.8 293.7 C834.3 291.6 850.4 286.7 855.0 285.3 C859.5 284.0 860.2 283.8 861.0 283.6M743.2 342.2 C743.6 341.6 747.0 339.7 746.7 337.3 C746.4 335.0 741.1 327.1 741.1 324.7 C741.1 322.2 743.7 320.6 746.7 319.1 C749.7 317.6 758.5 314.7 763.6 313.4 C768.6 312.1 779.0 310.3 784.7 309.2 C790.3 308.1 799.2 306.7 805.7 305.0 C812.3 303.3 826.5 298.5 833.9 296.6 C841.2 294.6 857.4 291.1 861.0 290.2M746.7 337.3 C748.1 337.3 756.5 338.8 757.2 337.3 C758.0 335.8 752.4 328.3 752.3 326.1 C752.2 323.8 753.2 321.9 756.5 320.5 C759.9 319.1 772.0 316.7 777.6 315.5 C783.3 314.4 793.1 313.4 798.7 312.0 C804.3 310.6 814.2 306.9 819.8 305.0 C825.4 303.1 835.4 299.6 840.9 298.0 C846.4 296.3 858.3 293.3 861.0 292.6M757.2 337.3 C758.8 338.3 768.5 344.9 769.2 344.4 C769.8 343.8 762.0 335.5 762.2 333.1 C762.3 330.7 766.7 327.8 770.6 326.1 C774.5 324.4 786.1 322.0 791.7 320.5 C797.3 319.0 806.2 316.7 812.8 314.8 C819.3 313.0 834.5 308.3 840.9 306.4 C847.3 304.5 858.3 301.3 861.0 300.6M769.2 344.4 C770.1 344.7 776.8 347.9 776.2 347.2 C775.7 346.4 764.8 340.8 765.0 338.7 C765.2 336.7 773.1 333.4 777.6 331.7 C782.1 330.0 792.2 327.8 798.7 326.1 C805.3 324.4 819.3 321.1 826.8 319.1 C834.3 317.0 850.4 312.0 855.0 310.6 C859.5 309.2 860.2 308.7 861.0 308.4M767.1 344.4 C771.3 342.9 790.7 335.5 798.7 333.1 C806.7 330.7 819.3 328.0 826.8 326.1 C834.3 324.2 850.4 320.2 855.0 319.1 C859.5 317.9 860.2 317.6 861.0 317.4M774.8 347.9 C775.8 349.1 776.8 356.9 781.8 357.0 C786.9 357.1 804.9 351.0 812.8 348.6 C820.7 346.1 834.5 341.0 840.9 338.7 C847.3 336.5 858.3 332.8 861.0 331.9M776.2 347.9 C779.2 347.0 792.0 343.5 798.7 341.5 C805.5 339.6 819.3 335.2 826.8 333.1 C834.3 331.0 850.4 327.2 855.0 326.1 C859.5 324.9 860.2 324.6 861.0 324.4M860.0 280.0 C863.7 279.0 880.6 274.7 888.1 273.0 C895.6 271.2 908.7 268.3 916.2 266.6 C923.7 264.9 937.2 261.6 944.4 260.3 C951.5 259.0 964.0 258.2 969.7 257.2 C975.3 256.2 981.7 254.0 986.5 252.6 C991.4 251.1 1004.2 246.8 1006.2 246.5 C1008.3 246.2 1005.0 249.0 1002.0 250.5 C999.0 251.9 986.2 256.3 983.7 257.2M860.0 282.8 C863.7 282.0 880.6 278.8 888.1 277.2 C895.6 275.6 908.7 272.6 916.2 270.8 C923.7 269.1 936.9 265.4 944.4 263.8 C951.9 262.2 965.0 260.2 972.5 258.9 C980.0 257.6 994.0 255.7 1000.6 254.0 C1007.2 252.3 1017.0 248.4 1021.7 246.2 C1026.4 244.1 1032.9 240.1 1035.7 237.8 C1038.6 235.6 1040.5 231.7 1042.8 229.4 C1045.0 227.0 1051.1 221.2 1052.6 220.2 C1054.1 219.3 1055.0 220.7 1054.0 222.3 C1053.1 223.9 1047.8 229.4 1045.6 232.2 C1043.3 235.0 1040.3 240.8 1037.2 243.4 C1034.0 246.1 1026.6 249.6 1021.7 251.9 C1016.8 254.1 1007.2 258.3 1000.6 260.3 C994.0 262.3 980.0 265.1 972.5 266.6 C965.0 268.1 948.1 270.9 944.4 271.5M860.0 288.4 C863.7 287.5 880.6 283.3 888.1 281.4 C895.6 279.5 908.7 276.0 916.2 274.4 C923.7 272.7 936.9 270.1 944.4 268.7 C951.9 267.3 965.0 265.3 972.5 263.8 C980.0 262.3 993.1 259.5 1000.6 257.5 C1008.1 255.5 1022.5 251.5 1028.7 249.1 C1034.9 246.6 1044.0 242.6 1047.0 239.2 C1050.0 235.8 1050.7 225.8 1051.2 223.7M1035.7 254.7 C1038.6 253.2 1051.2 246.1 1056.8 243.4 C1062.5 240.8 1072.2 237.1 1077.9 235.0 C1083.7 232.9 1097.1 228.9 1100.0 228.0M1054.0 225.9 C1056.3 226.4 1066.0 229.3 1070.9 230.1 C1075.8 230.8 1086.7 231.2 1090.6 231.5 C1094.5 231.8 1098.7 232.1 1100.0 232.2M860.0 294.0 C863.7 293.1 880.6 288.7 888.1 287.0 C895.6 285.3 908.7 282.9 916.2 281.4 C923.7 279.9 936.9 277.3 944.4 275.8 C951.9 274.3 965.0 271.8 972.5 270.1 C980.0 268.5 993.1 265.0 1000.6 263.1 C1008.1 261.2 1021.2 257.6 1028.7 256.1 C1036.2 254.6 1051.6 252.1 1056.8 251.9 C1062.1 251.7 1065.3 253.0 1068.1 254.7 C1070.9 256.4 1075.7 263.0 1077.9 264.5 C1080.2 266.0 1084.0 265.7 1085.0 265.9M860.0 301.1 C863.7 300.1 880.6 295.7 888.1 294.0 C895.6 292.4 908.7 289.9 916.2 288.4 C923.7 286.9 936.9 284.7 944.4 282.8 C951.9 280.9 965.0 276.4 972.5 274.4 C980.0 272.3 993.1 269.0 1000.6 267.3 C1008.1 265.6 1021.2 262.8 1028.7 261.7 C1036.2 260.6 1051.6 258.7 1056.8 258.9 C1062.1 259.1 1066.2 261.0 1068.1 263.1 C1070.0 265.2 1070.5 272.9 1070.9 274.4M860.0 309.5 C863.7 308.6 880.6 304.4 888.1 302.5 C895.6 300.6 908.7 297.3 916.2 295.4 C923.7 293.6 938.7 289.7 944.4 288.4 C950.0 287.1 952.8 287.1 958.4 285.6 C964.0 284.1 979.0 279.0 986.5 277.2 C994.0 275.3 1007.2 272.7 1014.7 271.5 C1022.2 270.4 1037.2 268.9 1042.8 268.7 C1048.4 268.5 1054.2 269.0 1056.8 270.1 C1059.5 271.3 1061.7 275.1 1062.5 277.2 C1063.2 279.2 1064.0 284.1 1062.5 285.6 C1061.0 287.1 1053.8 287.5 1051.2 288.4 C1048.6 289.4 1043.9 292.1 1042.8 292.6M860.0 320.8 C863.7 319.6 880.6 314.2 888.1 312.3 C895.6 310.4 908.7 308.2 916.2 306.7 C923.7 305.2 936.9 303.1 944.4 301.1 C951.9 299.0 965.0 294.0 972.5 291.2 C980.0 288.4 993.1 282.2 1000.6 280.0 C1008.1 277.7 1021.2 275.3 1028.7 274.4 C1036.2 273.4 1053.1 273.1 1056.8 273.0M860.0 327.8 C863.7 326.7 880.6 321.2 888.1 319.3 C895.6 317.5 908.7 315.4 916.2 313.7 C923.7 312.0 937.8 308.9 944.4 306.7 C950.9 304.4 959.8 299.3 965.4 296.9 C971.1 294.4 980.0 290.5 986.5 288.4 C993.1 286.4 1007.2 282.9 1014.7 281.4 C1022.2 279.9 1039.0 277.7 1042.8 277.2M860.0 330.6 C865.6 329.5 891.9 324.0 902.2 322.2 C912.5 320.3 929.8 317.9 937.3 316.5 C944.8 315.2 953.7 314.6 958.4 312.3 C963.1 310.1 968.7 302.5 972.5 299.7 C976.2 296.9 981.9 293.5 986.5 291.2 C991.2 289.0 1001.1 284.9 1007.6 282.8 C1014.2 280.7 1029.2 276.9 1035.7 275.8 C1042.3 274.6 1054.0 274.5 1056.8 274.4M1020.0 246.4 C1021.4 245.6 1028.4 241.7 1030.5 240.8 C1032.7 239.8 1034.8 240.6 1036.2 239.4 C1037.6 238.1 1039.3 234.1 1041.1 231.6 C1042.9 229.2 1047.8 222.6 1049.5 221.1 C1051.2 219.6 1053.1 220.3 1053.7 220.4 C1054.4 220.5 1054.8 221.1 1054.4 221.8 C1054.1 222.4 1051.8 223.9 1050.9 225.3 C1050.1 226.7 1049.0 230.5 1048.1 232.3 C1047.3 234.2 1045.7 237.9 1044.6 239.4 C1043.5 240.9 1041.6 242.3 1039.7 243.6 C1037.8 244.9 1033.2 247.7 1030.5 249.2 C1027.9 250.7 1021.4 254.1 1020.0 254.8M1053.0 225.3 C1052.6 225.5 1050.3 225.9 1049.5 226.7 C1048.8 227.6 1047.5 229.6 1047.4 231.6 C1047.3 233.7 1049.1 240.0 1048.8 242.2 C1048.5 244.3 1047.0 246.2 1045.3 247.8 C1043.6 249.4 1036.7 253.4 1036.2 254.1 C1035.6 254.9 1038.6 253.9 1041.1 253.4 C1043.6 253.0 1051.4 251.9 1055.1 250.6 C1058.9 249.3 1067.3 244.5 1069.2 243.6M1053.0 225.3 C1054.3 225.5 1059.1 226.2 1062.2 226.7 C1065.3 227.3 1072.0 229.0 1076.2 229.5 C1080.5 230.1 1090.5 230.5 1093.8 230.9 C1097.1 231.4 1099.3 231.8 1100.8 233.0 C1102.3 234.3 1105.2 239.6 1105.1 240.1 C1104.9 240.5 1100.7 237.2 1099.4 236.6 C1098.2 235.9 1097.5 234.8 1095.9 235.1 C1094.3 235.5 1089.2 238.1 1087.5 239.4 C1085.8 240.7 1083.7 243.7 1083.3 245.0 C1082.8 246.3 1084.9 249.2 1084.0 249.2 C1083.0 249.2 1078.2 245.7 1076.2 245.0 C1074.3 244.2 1070.1 243.8 1069.2 243.6M1069.2 243.6 C1070.0 243.8 1072.8 244.2 1074.8 245.0 C1076.9 245.7 1082.8 247.7 1084.7 249.2 C1086.5 250.7 1089.0 254.0 1088.9 256.2 C1088.8 258.5 1085.7 265.3 1084.0 266.1 C1082.3 266.8 1078.7 262.8 1076.2 261.9 C1073.8 260.9 1068.0 259.7 1065.7 259.1 C1063.4 258.4 1059.6 257.2 1058.7 256.9M1020.0 266.1 C1021.9 265.5 1029.4 262.8 1034.1 261.9 C1038.7 260.9 1050.5 258.9 1055.1 259.1 C1059.8 259.2 1065.4 262.3 1069.2 263.3 C1073.1 264.2 1082.0 265.7 1084.0 266.1M1020.0 273.1 C1022.8 272.4 1035.9 268.4 1041.1 267.5 C1046.2 266.5 1055.4 265.9 1058.7 266.1 C1061.9 266.3 1064.3 267.9 1065.7 268.9 C1067.1 269.9 1069.9 272.7 1069.2 273.8 C1068.6 274.9 1061.9 276.9 1060.8 277.3M761.9 645.8 C763.5 647.6 771.2 655.5 773.5 659.3 C775.8 663.2 777.8 670.9 779.3 674.8 C780.9 678.6 782.5 684.4 785.1 688.3 C787.7 692.2 795.0 699.9 798.6 703.7 C802.2 707.6 809.3 713.4 812.2 717.3 C815.0 721.1 817.8 730.1 819.9 732.7 C821.9 735.3 826.6 736.1 827.6 736.6M773.5 659.3 L785.1 653.5M772.6 674.8 C773.5 675.8 777.1 679.7 779.3 682.5 C781.5 685.3 785.6 692.4 789.0 696.0 C792.3 699.6 800.8 705.9 804.4 709.5 C808.0 713.1 813.2 720.2 816.0 723.1 C818.9 725.9 822.8 730.5 825.7 730.8 C828.5 731.0 831.1 728.1 837.3 725.0 C843.4 721.9 863.8 711.3 872.0 707.6 C880.3 703.9 895.5 698.4 899.1 697.0M783.2 678.6 C784.7 680.2 790.9 686.6 794.8 690.2 C798.6 693.8 808.5 702.1 812.2 705.7 C815.8 709.3 819.8 714.7 821.8 717.3 C823.9 719.8 820.9 726.8 827.6 725.0 C834.3 723.2 862.4 707.9 872.0 703.7 C881.7 699.6 896.3 695.4 900.0 694.1M810.2 686.4 L804.4 697.9M825.7 721.1 C831.9 718.3 862.2 704.1 872.0 699.9 C881.8 695.6 895.5 690.7 899.1 689.3M785.1 641.9 C784.9 643.2 782.4 648.2 783.2 651.6 C784.0 654.9 788.3 662.9 790.9 667.0 C793.5 671.2 799.9 679.9 802.5 682.5 C805.1 685.1 807.6 686.2 810.2 686.4 C812.8 686.5 820.3 683.8 821.8 683.5M900.3 456.9 C906.9 459.7 939.2 473.1 949.5 478.0 C959.8 482.8 971.4 489.5 977.6 493.4 C983.8 497.4 992.2 504.9 995.9 507.5 C999.7 510.1 1002.6 512.6 1005.7 513.1 C1008.9 513.6 1016.1 511.6 1019.8 511.0 C1023.6 510.4 1030.1 509.4 1033.9 508.9 C1037.6 508.4 1044.4 508.0 1047.9 507.5 C1051.5 506.9 1057.6 505.2 1060.6 504.7 C1063.5 504.1 1068.7 503.5 1070.0 503.3M1024.0 511.7 C1025.3 511.9 1032.7 513.5 1033.9 513.1 C1035.0 512.7 1031.5 509.8 1032.5 508.9 C1033.4 508.0 1038.6 506.2 1040.9 506.1 C1043.1 506.0 1048.2 507.9 1049.3 508.2M1031.1 551.1 L1070.0 542.6M1060.0 544.8 C1062.3 544.3 1071.7 543.6 1077.6 541.3 C1083.4 539.0 1096.4 530.3 1103.9 527.2 C1111.4 524.2 1129.8 519.6 1133.7 518.5M1214.5 625.6 C1214.7 627.4 1213.4 637.0 1216.2 639.6 C1219.1 642.2 1229.5 643.7 1235.6 644.9 C1241.6 646.0 1254.4 648.4 1261.9 648.4 C1269.4 648.4 1287.1 647.0 1291.7 644.9 C1296.4 642.8 1296.3 634.2 1297.0 632.6M1072.3 495.6 L1081.1 492.1M877.8 395.6 C877.8 391.9 877.4 371.6 877.8 367.5 C878.2 363.4 873.9 367.5 880.6 364.7 C887.4 361.9 920.2 349.3 928.4 346.4 C936.7 343.5 936.9 343.4 942.5 342.9 C948.1 342.4 965.0 342.9 970.6 342.9 C976.2 342.9 982.8 342.9 984.7 342.9M830.0 342.2 C832.1 342.9 843.2 346.7 845.5 347.8 C847.7 348.9 847.1 349.4 846.9 350.6 C846.7 351.8 844.4 356.1 844.1 356.9M776.8 348.2 C776.4 349.5 773.5 355.3 773.7 358.3 C774.0 361.2 777.8 367.2 778.8 370.4 C779.7 373.6 780.7 377.7 780.8 382.5 C780.9 387.4 779.8 400.8 779.8 406.8 C779.8 412.7 780.4 423.2 780.8 427.0 C781.2 430.7 782.3 432.8 782.8 435.1 C783.4 437.3 782.4 443.6 784.8 444.1 C787.3 444.7 798.9 439.8 801.0 439.1M788.9 366.4 C788.4 368.0 785.7 374.2 784.8 378.5 C784.0 382.8 783.2 393.3 782.8 398.7 C782.4 404.1 781.8 414.3 781.8 418.9 C781.8 423.5 782.7 431.1 782.8 433.0M811.1 352.2 C812.2 353.6 819.3 359.8 819.2 362.3 C819.1 364.9 811.7 368.7 810.1 371.4 C808.5 374.1 807.7 374.8 807.1 382.5 C806.5 390.2 805.7 422.8 805.5 429.0M819.2 362.3 C818.2 363.7 813.3 368.7 812.1 372.4 C810.9 376.2 810.2 382.5 810.1 390.6 C810.0 398.7 811.0 427.4 811.1 433.0M772.7 433.0 L782.8 451.2M776.8 443.1 C776.2 444.5 773.7 450.8 772.7 453.2 C771.8 455.7 771.0 459.2 769.7 461.3 C768.4 463.5 763.8 469.3 762.6 469.4 C761.4 469.5 761.7 462.1 760.6 462.3 C759.5 462.6 755.5 471.2 754.1 471.4 C752.8 471.6 752.2 463.1 750.5 463.7 C748.8 464.4 743.0 472.7 741.4 476.5 C739.8 480.2 738.8 489.6 738.4 491.6M738.4 491.6 C740.0 493.8 747.5 503.7 750.5 507.8 C753.5 511.8 757.9 517.3 760.6 521.9 C763.3 526.5 768.6 537.0 770.7 542.1 C772.9 547.2 776.0 557.7 776.8 560.1M744.4 479.5 C745.0 481.1 746.6 487.8 748.5 491.6 C750.4 495.4 756.2 504.0 758.6 507.8 C761.0 511.5 764.2 515.9 766.7 519.9 C769.1 523.9 774.3 532.7 776.8 538.1 C779.2 543.4 783.8 557.2 784.8 560.1M750.5 464.3 C751.0 467.2 752.9 480.8 754.5 485.6 C756.2 490.3 760.5 496.2 762.6 499.7 C764.8 503.2 768.3 508.0 770.7 511.8 C773.1 515.6 778.1 523.1 780.8 528.0 C783.5 532.8 789.0 543.9 790.9 548.2 C792.8 552.5 794.4 558.5 794.9 560.1M760.6 462.3 C760.6 465.2 759.5 478.8 760.6 483.5 C761.7 488.2 766.5 494.4 768.7 497.7 C770.8 500.9 774.6 504.8 776.8 507.8 C778.9 510.7 782.4 516.7 784.8 519.9 C787.3 523.1 792.3 527.7 794.9 532.0 C797.6 536.3 803.7 549.5 805.1 552.2M769.7 461.3 C769.6 463.2 768.0 471.4 768.7 475.5 C769.4 479.5 773.1 487.8 774.7 491.6 C776.4 495.4 779.2 499.7 780.8 503.7 C782.4 507.8 785.0 519.2 786.9 521.9 C788.8 524.6 793.9 523.7 794.9 523.9M706.1 470.4 C707.7 471.1 715.5 473.2 718.2 475.5 C720.9 477.7 724.4 484.1 726.3 487.6 C728.1 491.1 730.4 497.7 732.3 501.7 C734.2 505.8 738.0 513.6 740.4 517.9 C742.8 522.2 747.8 529.5 750.5 534.0 C753.2 538.6 758.7 548.7 760.6 552.2 C762.5 555.7 764.1 559.1 764.6 560.1M708.1 485.6 C708.6 487.4 710.0 495.7 712.1 499.7 C714.3 503.7 721.0 511.5 724.2 515.9 C727.5 520.2 733.1 527.7 736.4 532.0 C739.6 536.3 746.1 544.4 748.5 548.2 C750.9 551.9 753.7 558.5 754.5 560.1M732.3 530.0 C734.2 532.1 741.9 539.8 746.4 545.5 C750.8 551.1 761.0 565.6 766.0 572.1 C771.1 578.7 780.0 589.7 784.3 594.6 C788.6 599.5 795.0 605.3 798.3 608.7 C801.7 612.0 806.8 616.9 809.6 619.9 C812.4 622.9 817.2 628.3 819.4 631.1 C821.6 633.9 824.4 641.0 826.4 641.0 C828.5 641.0 833.7 632.4 834.9 631.1M752.0 530.0 C753.1 531.5 757.4 537.7 760.4 541.2 C763.4 544.8 772.6 554.6 774.4 556.7M767.4 530.0 C768.9 532.1 776.4 541.9 778.7 545.5 C780.9 549.0 782.6 553.9 784.3 556.7 C786.0 559.5 789.1 563.5 791.3 566.5 C793.6 569.5 799.1 576.2 801.1 579.2 C803.2 582.2 806.8 586.9 806.8 589.0 C806.8 591.1 801.9 593.9 801.1 594.6M774.4 530.0 C775.4 531.1 779.8 536.9 781.5 538.4 C783.2 539.9 785.6 540.1 787.1 541.2 C788.6 542.4 791.2 544.6 792.7 546.9 C794.2 549.1 796.5 554.9 798.3 558.1 C800.2 561.3 804.7 567.9 806.8 570.7 C808.8 573.5 813.0 576.0 813.8 579.2 C814.5 582.3 812.0 591.8 812.4 594.6 C812.7 597.4 814.7 597.6 816.6 600.2 C818.5 602.9 824.2 610.7 826.4 614.3 C828.7 617.8 832.1 624.7 833.4 626.9 C834.8 629.2 834.8 631.0 836.3 631.1 C837.8 631.3 843.6 628.7 844.7 628.3M781.5 535.6 C782.6 536.2 788.0 537.8 789.9 539.8 C791.8 541.9 793.6 548.1 795.5 551.1 C797.4 554.1 801.7 559.3 803.9 562.3 C806.2 565.3 811.3 572.0 812.4 573.5M764.6 572.1 C764.1 573.6 760.8 581.1 760.4 583.4 C760.0 585.6 760.5 586.6 761.8 589.0 C763.1 591.4 768.0 598.3 770.2 601.6 C772.5 605.0 776.4 610.7 778.7 614.3 C780.9 617.8 784.8 625.1 787.1 628.3 C789.3 631.5 792.9 635.4 795.5 638.2 C798.1 641.0 804.1 646.6 806.8 649.4 C809.4 652.2 813.1 657.2 815.2 659.2 C817.2 661.3 819.8 663.9 822.2 664.9 C824.6 665.8 831.9 666.1 833.4 666.3M761.8 605.9 C762.4 606.6 764.5 609.8 766.0 611.5 C767.5 613.2 771.0 615.9 773.0 618.5 C775.1 621.1 779.4 628.3 781.5 631.1 C783.5 633.9 786.2 637.1 788.5 639.6 C790.7 642.0 795.9 646.6 798.3 649.4 C800.8 652.2 804.5 658.2 806.8 660.6 C809.0 663.1 812.9 666.3 815.2 667.7 C817.4 669.0 822.5 670.1 823.6 670.5M764.6 608.7 C765.0 609.4 766.1 612.4 767.4 614.3 C768.7 616.2 772.2 620.1 774.4 622.7 C776.7 625.3 781.8 631.3 784.3 633.9 C786.7 636.6 790.5 639.8 792.7 642.4 C795.0 645.0 798.9 650.6 801.1 653.6 C803.4 656.6 807.1 661.9 809.6 664.9 C812.0 667.8 818.1 674.6 819.4 676.1M770.2 598.8 C771.4 600.1 776.0 605.9 778.7 608.7 C781.3 611.5 786.9 617.3 789.9 619.9 C792.9 622.5 798.3 626.1 801.1 628.3 C803.9 630.6 808.7 634.3 811.0 636.8 C813.2 639.2 815.9 644.7 818.0 646.6 C820.1 648.5 824.4 650.1 826.4 650.8 C828.5 651.6 832.5 652.0 833.4 652.2M815.2 626.9 C815.9 628.6 819.5 636.9 820.8 639.6 C822.1 642.2 824.5 645.7 825.0 646.6M773.0 657.8 L785.7 652.2M832.8 359.1 L844.1 356.9 L864.4 442.0 L851.1 444.8 L832.8 359.1M883.4 404.0 L880.6 412.5 L880.6 447.6 L893.3 451.8" stroke="#ececec" stroke-width="1.15" fill="none" stroke-linejoin="round"/><path d="M371.4 545.1 L537.5 484.6 L562.6 472.7 L1157.0 203.0M379.0 566.4 L542.8 502.8 L603.0 478.8 L671.0 469.5 L702.0 468.5M773.7 434.0 L837.6 397.5 L853.6 397.5 L885.5 396.1 L899.2 390.6 L997.3 348.2 L1079.5 303.9 L1175.3 278.8M760.0 513.8 L785.1 507.0 L901.5 454.5 L922.0 445.4 L1011.0 424.8 L1125.1 376.9 L1221.0 335.8M819.3 577.7 L842.2 567.2 L875.0 553.6 L891.0 551.7 L912.9 548.1 L951.7 532.1M1001.9 512.9 L1033.8 509.3 L1061.2 500.2 L1102.3 488.7 L1159.4 445.4 L1214.1 413.4 L1239.2 409.8M702.0 468.5 L772.0 437.0 L790.0 430.0M364.7 636.7 L396.9 620.9 L617.3 573.5 L714.0 538.7 L785.8 507.4M443.7 721.4 L581.0 671.0 L642.0 649.4 L684.6 633.6 L721.0 615.5 L732.0 611.7 L787.1 597.4 L819.3 577.7" stroke="#f0f0f0" stroke-width="1.3" fill="none" stroke-linejoin="round"/><path d="M951.7 532.1 L1001.9 513.8" stroke="#2a4fd0" stroke-width="1.2" fill="none" stroke-dasharray="4 3"/><g transform="translate(537.6 478.0) rotate(-20)"><rect x="-3.8" y="-5" width="7.6" height="9" fill="#b01018" fill-opacity="0.25"/><text x="0" y="3.5" font-size="10" fill="#f2f2f2" text-anchor="middle">3</text></g><circle cx="537.6" cy="484.3" r="2" fill="#fff"/><g transform="translate(558.1 467.0) rotate(-20)"><rect x="-3.8" y="-5" width="7.6" height="9" fill="#b01018" fill-opacity="0.25"/><text x="0" y="3.5" font-size="10" fill="#f2f2f2" text-anchor="middle">1</text></g><circle cx="562.9" cy="472.6" r="2" fill="#fff"/><g transform="translate(537.6 499.5) rotate(-20)"><rect x="-6.6" y="-5" width="13.2" height="9" fill="#b01018" fill-opacity="0.25"/><text x="0" y="3.5" font-size="10" fill="#f2f2f2" text-anchor="middle">04</text></g><circle cx="542.3" cy="502.7" r="2" fill="#fff"/><g transform="translate(592.9 474.2) rotate(-20)"><rect x="-6.6" y="-5" width="13.2" height="9" fill="#b01018" fill-opacity="0.25"/><text x="0" y="3.5" font-size="10" fill="#f2f2f2" text-anchor="middle">30</text></g><circle cx="603.0" cy="478.6" r="2" fill="#fff"/><g transform="translate(675.1 463.8) rotate(-5)"><rect x="-6.6" y="-5" width="13.2" height="9" fill="#b01018" fill-opacity="0.25"/><text x="0" y="3.5" font-size="10" fill="#f2f2f2" text-anchor="middle">59</text></g><circle cx="671.0" cy="469.5" r="2" fill="#fff"/><g transform="translate(765.2 433.1) rotate(-15)"><rect x="-6.6" y="-5" width="13.2" height="9" fill="#b01018" fill-opacity="0.25"/><text x="0" y="3.5" font-size="10" fill="#f2f2f2" text-anchor="middle">95</text></g><circle cx="772.2" cy="436.9" r="2" fill="#fff"/><g transform="translate(784.2 501.7) rotate(-20)"><rect x="-6.6" y="-5" width="13.2" height="9" fill="#b01018" fill-opacity="0.25"/><text x="0" y="3.5" font-size="10" fill="#f2f2f2" text-anchor="middle">35</text></g><circle cx="785.8" cy="507.4" r="2" fill="#fff"/><g transform="translate(709.9 534.9) rotate(-20)"><rect x="-9.4" y="-5" width="18.8" height="9" fill="#b01018" fill-opacity="0.25"/><text x="0" y="3.5" font-size="10" fill="#f2f2f2" text-anchor="middle">116</text></g><circle cx="714.0" cy="538.7" r="2" fill="#fff"/><g transform="translate(617.3 566.5) rotate(-15)"><rect x="-9.4" y="-5" width="18.8" height="9" fill="#b01018" fill-opacity="0.25"/><text x="0" y="3.5" font-size="10" fill="#f2f2f2" text-anchor="middle">113</text></g><circle cx="617.3" cy="573.5" r="2" fill="#fff"/><g transform="translate(577.7 666.1) rotate(-20)"><rect x="-9.4" y="-5" width="18.8" height="9" fill="#b01018" fill-opacity="0.25"/><text x="0" y="3.5" font-size="10" fill="#f2f2f2" text-anchor="middle">188</text></g><circle cx="580.9" cy="671.2" r="2" fill="#fff"/><g transform="translate(639.7 644.0) rotate(-20)"><rect x="-6.6" y="-5" width="13.2" height="9" fill="#b01018" fill-opacity="0.25"/><text x="0" y="3.5" font-size="10" fill="#f2f2f2" text-anchor="middle">17</text></g><circle cx="641.9" cy="649.4" r="2" fill="#fff"/><g transform="translate(679.9 629.8) rotate(-20)"><rect x="-6.6" y="-5" width="13.2" height="9" fill="#b01018" fill-opacity="0.25"/><text x="0" y="3.5" font-size="10" fill="#f2f2f2" text-anchor="middle">14</text></g><circle cx="684.6" cy="633.6" r="2" fill="#fff"/><g transform="translate(714.6 612.4) rotate(-20)"><rect x="-3.8" y="-5" width="7.6" height="9" fill="#b01018" fill-opacity="0.25"/><text x="0" y="3.5" font-size="10" fill="#f2f2f2" text-anchor="middle">6</text></g><circle cx="721.0" cy="615.5" r="2" fill="#fff"/><g transform="translate(732.0 605.1) rotate(-20)"><rect x="-9.4" y="-5" width="18.8" height="9" fill="#b01018" fill-opacity="0.25"/><text x="0" y="3.5" font-size="10" fill="#f2f2f2" text-anchor="middle">134</text></g><circle cx="732.0" cy="611.7" r="2" fill="#fff"/><g transform="translate(834.2 394.2) rotate(-10)"><rect x="-6.6" y="-5" width="13.2" height="9" fill="#b01018" fill-opacity="0.25"/><text x="0" y="3.5" font-size="10" fill="#f2f2f2" text-anchor="middle">52</text></g><circle cx="840.5" cy="397.0" r="2" fill="#fff"/><g transform="translate(853.9 390.7) rotate(-10)"><rect x="-6.6" y="-5" width="13.2" height="9" fill="#b01018" fill-opacity="0.25"/><text x="0" y="3.5" font-size="10" fill="#f2f2f2" text-anchor="middle">57</text></g><circle cx="853.2" cy="397.0" r="2" fill="#fff"/><g transform="translate(882.0 391.4) rotate(-10)"><rect x="-6.6" y="-5" width="13.2" height="9" fill="#b01018" fill-opacity="0.25"/><text x="0" y="3.5" font-size="10" fill="#f2f2f2" text-anchor="middle">63</text></g><circle cx="886.2" cy="396.3" r="2" fill="#fff"/><g transform="translate(898.2 385.1) rotate(-20)"><rect x="-6.6" y="-5" width="13.2" height="9" fill="#b01018" fill-opacity="0.25"/><text x="0" y="3.5" font-size="10" fill="#f2f2f2" text-anchor="middle">14</text></g><circle cx="899.6" cy="391.4" r="2" fill="#fff"/><g transform="translate(995.9 341.5) rotate(-15)"><rect x="-6.6" y="-5" width="13.2" height="9" fill="#b01018" fill-opacity="0.25"/><text x="0" y="3.5" font-size="10" fill="#f2f2f2" text-anchor="middle">62</text></g><circle cx="996.6" cy="347.8" r="2" fill="#fff"/><g transform="translate(1010.0 418.8) rotate(-20)"><rect x="-9.4" y="-5" width="18.8" height="9" fill="#b01018" fill-opacity="0.25"/><text x="0" y="3.5" font-size="10" fill="#f2f2f2" text-anchor="middle">110</text></g><circle cx="1011.4" cy="425.8" r="2" fill="#fff"/><g transform="translate(917.9 442.0) rotate(-15)"><rect x="-3.8" y="-5" width="7.6" height="9" fill="#b01018" fill-opacity="0.25"/><text x="0" y="3.5" font-size="10" fill="#f2f2f2" text-anchor="middle">6</text></g><circle cx="922.8" cy="446.2" r="2" fill="#fff"/><g transform="translate(900.3 451.1) rotate(-15)"><rect x="-6.6" y="-5" width="13.2" height="9" fill="#b01018" fill-opacity="0.25"/><text x="0" y="3.5" font-size="10" fill="#f2f2f2" text-anchor="middle">49</text></g><circle cx="907.3" cy="454.7" r="2" fill="#fff"/><g transform="translate(858.1 333.7) rotate(-15)"><rect x="-3.8" y="-5" width="7.6" height="9" fill="#b01018" fill-opacity="0.25"/><text x="0" y="3.5" font-size="10" fill="#f2f2f2" text-anchor="middle">5</text></g><circle cx="859.5" cy="335.9" r="2" fill="#fff"/><g transform="translate(868.0 329.5) rotate(-15)"><rect x="-3.8" y="-5" width="7.6" height="9" fill="#b01018" fill-opacity="0.25"/><text x="0" y="3.5" font-size="10" fill="#f2f2f2" text-anchor="middle">6</text></g><circle cx="870.0" cy="332.3" r="2" fill="#fff"/><g transform="translate(842.7 562.3) rotate(-20)"><rect x="-6.6" y="-5" width="13.2" height="9" fill="#b01018" fill-opacity="0.25"/><text x="0" y="3.5" font-size="10" fill="#f2f2f2" text-anchor="middle">90</text></g><circle cx="842.7" cy="568.0" r="2" fill="#fff"/><g transform="translate(868.7 550.4) rotate(-10)"><rect x="-3.8" y="-5" width="7.6" height="9" fill="#b01018" fill-opacity="0.25"/><text x="0" y="3.5" font-size="10" fill="#f2f2f2" text-anchor="middle">2</text></g><circle cx="875.0" cy="553.2" r="2" fill="#fff"/><g transform="translate(889.0 546.9) rotate(-10)"><rect x="-6.6" y="-5" width="13.2" height="9" fill="#b01018" fill-opacity="0.25"/><text x="0" y="3.5" font-size="10" fill="#f2f2f2" text-anchor="middle">47</text></g><circle cx="890.5" cy="552.5" r="2" fill="#fff"/><g transform="translate(903.1 556.0) rotate(-20)"><rect x="-6.6" y="-5" width="13.2" height="9" fill="#b01018" fill-opacity="0.25"/><text x="0" y="3.5" font-size="10" fill="#f2f2f2" text-anchor="middle">15</text></g><circle cx="913.7" cy="548.3" r="2" fill="#fff"/><g transform="translate(816.0 572.0) rotate(-20)"><rect x="-6.6" y="-5" width="13.2" height="9" fill="#b01018" fill-opacity="0.25"/><text x="0" y="3.5" font-size="10" fill="#f2f2f2" text-anchor="middle">58</text></g><circle cx="819.3" cy="577.7" r="2" fill="#fff"/><g transform="translate(787.5 591.5) rotate(-15)"><rect x="-6.6" y="-5" width="13.2" height="9" fill="#b01018" fill-opacity="0.25"/><text x="0" y="3.5" font-size="10" fill="#f2f2f2" text-anchor="middle">53</text></g><circle cx="787.1" cy="597.4" r="2" fill="#fff"/><g transform="translate(1157.0 442.0) rotate(-20)"><rect x="-9.4" y="-5" width="18.8" height="9" fill="#b01018" fill-opacity="0.25"/><text x="0" y="3.5" font-size="10" fill="#f2f2f2" text-anchor="middle">111</text></g><circle cx="1159.8" cy="446.2" r="2" fill="#fff"/><g transform="translate(1206.9 411.1) rotate(-20)"><rect x="-9.4" y="-5" width="18.8" height="9" fill="#b01018" fill-opacity="0.25"/><text x="0" y="3.5" font-size="10" fill="#f2f2f2" text-anchor="middle">8-7</text></g><circle cx="1214.0" cy="414.6" r="2" fill="#fff"/><g transform="translate(776.2 305.0) rotate(-8)"><rect x="-9.5" y="-3.6" width="19" height="6.6" fill="#c01018" fill-opacity="0.45"/><text x="0" y="2.2" font-size="6.3" fill="#fff" text-anchor="middle">230,0</text></g><circle cx="765.2" cy="308.5" r="0.8" fill="#fff"/><g transform="translate(797.3 311.3) rotate(-8)"><rect x="-9.5" y="-3.6" width="19" height="6.6" fill="#c01018" fill-opacity="0.45"/><text x="0" y="2.2" font-size="6.3" fill="#fff" text-anchor="middle">210,0</text></g><circle cx="786.3" cy="314.8" r="0.8" fill="#fff"/><g transform="translate(807.9 321.2) rotate(-8)"><rect x="-9.5" y="-3.6" width="19" height="6.6" fill="#c01018" fill-opacity="0.45"/><text x="0" y="2.2" font-size="6.3" fill="#fff" text-anchor="middle">190,0</text></g><circle cx="796.9" cy="324.7" r="0.8" fill="#fff"/><g transform="translate(855.0 279.7) rotate(-8)"><rect x="-9.5" y="-3.6" width="19" height="6.6" fill="#c01018" fill-opacity="0.45"/><text x="0" y="2.2" font-size="6.3" fill="#fff" text-anchor="middle">230,0</text></g><circle cx="844.0" cy="283.2" r="0.8" fill="#fff"/><g transform="translate(854.3 291.6) rotate(-8)"><rect x="-9.5" y="-3.6" width="19" height="6.6" fill="#c01018" fill-opacity="0.45"/><text x="0" y="2.2" font-size="6.3" fill="#fff" text-anchor="middle">210,0</text></g><circle cx="843.3" cy="295.1" r="0.8" fill="#fff"/><g transform="translate(846.5 305.0) rotate(-8)"><rect x="-9.5" y="-3.6" width="19" height="6.6" fill="#c01018" fill-opacity="0.45"/><text x="0" y="2.2" font-size="6.3" fill="#fff" text-anchor="middle">190,0</text></g><circle cx="835.5" cy="308.5" r="0.8" fill="#fff"/><g transform="translate(853.5 321.2) rotate(-8)"><rect x="-9.5" y="-3.6" width="19" height="6.6" fill="#c01018" fill-opacity="0.45"/><text x="0" y="2.2" font-size="6.3" fill="#fff" text-anchor="middle">170,0</text></g><circle cx="842.5" cy="324.7" r="0.8" fill="#fff"/><g transform="translate(832.5 344.4) rotate(-8)"><rect x="-9.5" y="-3.6" width="19" height="6.6" fill="#c01018" fill-opacity="0.45"/><text x="0" y="2.2" font-size="6.3" fill="#fff" text-anchor="middle">150,0</text></g><circle cx="821.5" cy="347.9" r="0.8" fill="#fff"/><g transform="translate(810.0 395.7) rotate(-8)"><rect x="-9.5" y="-3.6" width="19" height="6.6" fill="#c01018" fill-opacity="0.45"/><text x="0" y="2.2" font-size="6.3" fill="#fff" text-anchor="middle">169,0</text></g><circle cx="799.0" cy="399.2" r="0.8" fill="#fff"/><g transform="translate(919.0 269.4) rotate(-8)"><rect x="-9.5" y="-3.6" width="19" height="6.6" fill="#c01018" fill-opacity="0.45"/><text x="0" y="2.2" font-size="6.3" fill="#fff" text-anchor="middle">210,0</text></g><circle cx="908.0" cy="272.9" r="0.8" fill="#fff"/><g transform="translate(944.4 275.8) rotate(-8)"><rect x="-9.5" y="-3.6" width="19" height="6.6" fill="#c01018" fill-opacity="0.45"/><text x="0" y="2.2" font-size="6.3" fill="#fff" text-anchor="middle">190,0</text></g><circle cx="933.4" cy="279.3" r="0.8" fill="#fff"/><g transform="translate(976.7 254.0) rotate(-8)"><rect x="-9.5" y="-3.6" width="19" height="6.6" fill="#c01018" fill-opacity="0.45"/><text x="0" y="2.2" font-size="6.3" fill="#fff" text-anchor="middle">210,0</text></g><circle cx="965.7" cy="257.5" r="0.8" fill="#fff"/><g transform="translate(1014.7 254.7) rotate(-8)"><rect x="-9.5" y="-3.6" width="19" height="6.6" fill="#c01018" fill-opacity="0.45"/><text x="0" y="2.2" font-size="6.3" fill="#fff" text-anchor="middle">190,0</text></g><circle cx="1003.7" cy="258.2" r="0.8" fill="#fff"/><g transform="translate(940.1 294.0) rotate(-8)"><rect x="-9.5" y="-3.6" width="19" height="6.6" fill="#c01018" fill-opacity="0.45"/><text x="0" y="2.2" font-size="6.3" fill="#fff" text-anchor="middle">170,0</text></g><circle cx="929.1" cy="297.5" r="0.8" fill="#fff"/><g transform="translate(952.8 306.7) rotate(-8)"><rect x="-9.5" y="-3.6" width="19" height="6.6" fill="#c01018" fill-opacity="0.45"/><text x="0" y="2.2" font-size="6.3" fill="#fff" text-anchor="middle">150,0</text></g><circle cx="941.8" cy="310.2" r="0.8" fill="#fff"/><g transform="translate(996.4 272.2) rotate(-8)"><rect x="-9.5" y="-3.6" width="19" height="6.6" fill="#c01018" fill-opacity="0.45"/><text x="0" y="2.2" font-size="6.3" fill="#fff" text-anchor="middle">170,0</text></g><circle cx="985.4" cy="275.7" r="0.8" fill="#fff"/><g transform="translate(1021.7 273.0) rotate(-8)"><rect x="-9.5" y="-3.6" width="19" height="6.6" fill="#c01018" fill-opacity="0.45"/><text x="0" y="2.2" font-size="6.3" fill="#fff" text-anchor="middle">150,0</text></g><circle cx="1010.7" cy="276.5" r="0.8" fill="#fff"/><g transform="translate(1066.7 230.8) rotate(-8)"><rect x="-9.5" y="-3.6" width="19" height="6.6" fill="#c01018" fill-opacity="0.45"/><text x="0" y="2.2" font-size="6.3" fill="#fff" text-anchor="middle">151,0</text></g><circle cx="1055.7" cy="234.3" r="0.8" fill="#fff"/><g transform="translate(1073.7 254.0) rotate(-8)"><rect x="-9.5" y="-3.6" width="19" height="6.6" fill="#c01018" fill-opacity="0.45"/><text x="0" y="2.2" font-size="6.3" fill="#fff" text-anchor="middle">170,0</text></g><circle cx="1062.7" cy="257.5" r="0.8" fill="#fff"/><g transform="translate(794.2 426.8) rotate(-8)"><rect x="-9.5" y="-3.6" width="19" height="6.6" fill="#c01018" fill-opacity="0.45"/><text x="0" y="2.2" font-size="6.3" fill="#fff" text-anchor="middle">170,0</text></g><circle cx="783.2" cy="430.3" r="0.8" fill="#fff"/><g transform="translate(765.8 480.5) rotate(-8)"><rect x="-9.5" y="-3.6" width="19" height="6.6" fill="#c01018" fill-opacity="0.45"/><text x="0" y="2.2" font-size="6.3" fill="#fff" text-anchor="middle">210,0</text></g><circle cx="754.8" cy="484.0" r="0.8" fill="#fff"/><g transform="translate(764.2 505.8) rotate(-8)"><rect x="-9.5" y="-3.6" width="19" height="6.6" fill="#c01018" fill-opacity="0.45"/><text x="0" y="2.2" font-size="6.3" fill="#fff" text-anchor="middle">230,0</text></g><circle cx="753.2" cy="509.3" r="0.8" fill="#fff"/><g transform="translate(789.5 562.6) rotate(-8)"><rect x="-9.5" y="-3.6" width="19" height="6.6" fill="#c01018" fill-opacity="0.45"/><text x="0" y="2.2" font-size="6.3" fill="#fff" text-anchor="middle">230,0</text></g><circle cx="778.5" cy="566.1" r="0.8" fill="#fff"/><g transform="translate(783.2 602.0) rotate(-8)"><rect x="-9.5" y="-3.6" width="19" height="6.6" fill="#c01018" fill-opacity="0.45"/><text x="0" y="2.2" font-size="6.3" fill="#fff" text-anchor="middle">250,0</text></g><circle cx="772.2" cy="605.5" r="0.8" fill="#fff"/><g transform="translate(792.6 621.0) rotate(-8)"><rect x="-9.5" y="-3.6" width="19" height="6.6" fill="#c01018" fill-opacity="0.45"/><text x="0" y="2.2" font-size="6.3" fill="#fff" text-anchor="middle">270,0</text></g><circle cx="781.6" cy="624.5" r="0.8" fill="#fff"/><g transform="translate(825.8 644.7) rotate(-8)"><rect x="-9.5" y="-3.6" width="19" height="6.6" fill="#c01018" fill-opacity="0.45"/><text x="0" y="2.2" font-size="6.3" fill="#fff" text-anchor="middle">230,0</text></g><circle cx="814.8" cy="648.2" r="0.8" fill="#fff"/><g transform="translate(803.7 652.6) rotate(-8)"><rect x="-9.5" y="-3.6" width="19" height="6.6" fill="#c01018" fill-opacity="0.45"/><text x="0" y="2.2" font-size="6.3" fill="#fff" text-anchor="middle">250,0</text></g><circle cx="792.7" cy="656.1" r="0.8" fill="#fff"/><g transform="translate(825.8 668.4) rotate(-8)"><rect x="-9.5" y="-3.6" width="19" height="6.6" fill="#c01018" fill-opacity="0.45"/><text x="0" y="2.2" font-size="6.3" fill="#fff" text-anchor="middle">270,0</text></g><circle cx="814.8" cy="671.9" r="0.8" fill="#fff"/><g transform="translate(825.8 692.1) rotate(-8)"><rect x="-9.5" y="-3.6" width="19" height="6.6" fill="#c01018" fill-opacity="0.45"/><text x="0" y="2.2" font-size="6.3" fill="#fff" text-anchor="middle">290,0</text></g><circle cx="814.8" cy="695.6" r="0.8" fill="#fff"/><g transform="translate(829.0 722.1) rotate(-8)"><rect x="-9.5" y="-3.6" width="19" height="6.6" fill="#c01018" fill-opacity="0.45"/><text x="0" y="2.2" font-size="6.3" fill="#fff" text-anchor="middle">310,0</text></g><circle cx="818.0" cy="725.6" r="0.8" fill="#fff"/><g transform="translate(863.7 636.8) rotate(-8)"><rect x="-9.5" y="-3.6" width="19" height="6.6" fill="#c01018" fill-opacity="0.45"/><text x="0" y="2.2" font-size="6.3" fill="#fff" text-anchor="middle">210,0</text></g><circle cx="852.7" cy="640.3" r="0.8" fill="#fff"/><g transform="translate(1043.0 278.8) rotate(-5)"><text x="0" y="2.3" font-size="6.5" font-weight="bold" fill="#e0141e" text-anchor="middle">-4000</text></g><g transform="translate(979.0 310.7) rotate(-5)"><text x="0" y="2.3" font-size="6.5" font-weight="bold" fill="#e0141e" text-anchor="middle">-4000</text></g><g transform="translate(1021.0 303.0) rotate(-5)"><text x="0" y="2.3" font-size="6.5" font-weight="bold" fill="#e0141e" text-anchor="middle">-4000</text></g><g transform="translate(890.0 333.6) rotate(-5)"><text x="0" y="2.3" font-size="6.5" font-weight="bold" fill="#e0141e" text-anchor="middle">-4000</text></g><g transform="translate(954.0 333.6) rotate(-5)"><text x="0" y="2.3" font-size="6.5" font-weight="bold" fill="#e0141e" text-anchor="middle">-4000</text></g><g transform="translate(940.3 350.9) rotate(-5)"><text x="0" y="2.3" font-size="6.5" font-weight="bold" fill="#e0141e" text-anchor="middle">-4000</text></g><g transform="translate(972.2 362.3) rotate(-5)"><text x="0" y="2.3" font-size="6.5" font-weight="bold" fill="#e0141e" text-anchor="middle">-4000</text></g><g transform="translate(972.2 373.3) rotate(-5)"><text x="0" y="2.3" font-size="6.5" font-weight="bold" fill="#e0141e" text-anchor="middle">-4000</text></g><g transform="translate(1066.7 387.0) rotate(-5)"><text x="0" y="2.3" font-size="6.5" font-weight="bold" fill="#e0141e" text-anchor="middle">-4000</text></g><g transform="translate(1001.9 394.3) rotate(-5)"><text x="0" y="2.3" font-size="6.5" font-weight="bold" fill="#e0141e" text-anchor="middle">-4000</text></g><g transform="translate(873.2 406.6) rotate(-5)"><text x="0" y="2.3" font-size="6.5" font-weight="bold" fill="#e0141e" text-anchor="middle">-4000</text></g><g transform="translate(1009.6 432.6) rotate(-5)"><text x="0" y="2.3" font-size="6.5" font-weight="bold" fill="#e0141e" text-anchor="middle">-4000</text></g><g transform="translate(873.2 458.2) rotate(-5)"><text x="0" y="2.3" font-size="6.5" font-weight="bold" fill="#e0141e" text-anchor="middle">-4000</text></g><g transform="translate(1015.6 477.3) rotate(-5)"><text x="0" y="2.3" font-size="6.5" font-weight="bold" fill="#e0141e" text-anchor="middle">-4000</text></g><g transform="translate(1098.7 477.3) rotate(-5)"><text x="0" y="2.3" font-size="6.5" font-weight="bold" fill="#e0141e" text-anchor="middle">-4000</text></g><g transform="translate(1117.4 486.5) rotate(-5)"><text x="0" y="2.3" font-size="6.5" font-weight="bold" fill="#e0141e" text-anchor="middle">-4000</text></g><g transform="translate(1133.3 496.5) rotate(-5)"><text x="0" y="2.3" font-size="6.5" font-weight="bold" fill="#e0141e" text-anchor="middle">-4000</text></g><g transform="translate(1164.0 495.6) rotate(-5)"><text x="0" y="2.3" font-size="6.5" font-weight="bold" fill="#e0141e" text-anchor="middle">-4000</text></g><g transform="translate(910.6 538.5) rotate(-5)"><text x="0" y="2.3" font-size="6.5" font-weight="bold" fill="#e0141e" text-anchor="middle">-4000</text></g><g transform="translate(825.3 540.3) rotate(-5)"><text x="0" y="2.3" font-size="6.5" font-weight="bold" fill="#e0141e" text-anchor="middle">-4000</text></g><g transform="translate(807.0 555.0) rotate(-5)"><text x="0" y="2.3" font-size="6.5" font-weight="bold" fill="#e0141e" text-anchor="middle">-4000</text></g><g transform="translate(887.8 576.4) rotate(-5)"><text x="0" y="2.3" font-size="6.5" font-weight="bold" fill="#e0141e" text-anchor="middle">-4000</text></g><g transform="translate(1185.4 521.6) rotate(-5)"><text x="0" y="2.3" font-size="6.5" font-weight="bold" fill="#e0141e" text-anchor="middle">-4000</text></g><g transform="translate(1221.9 537.6) rotate(-5)"><text x="0" y="2.3" font-size="6.5" font-weight="bold" fill="#e0141e" text-anchor="middle">-4000</text></g><g transform="translate(1202.7 558.1) rotate(-5)"><text x="0" y="2.3" font-size="6.5" font-weight="bold" fill="#e0141e" text-anchor="middle">-4000</text></g><g transform="translate(1237.0 558.1) rotate(-5)"><text x="0" y="2.3" font-size="6.5" font-weight="bold" fill="#e0141e" text-anchor="middle">-4000</text></g><g transform="translate(1239.2 589.6) rotate(-5)"><text x="0" y="2.3" font-size="6.5" font-weight="bold" fill="#e0141e" text-anchor="middle">-4000</text></g><g transform="translate(1274.8 617.0) rotate(-5)"><text x="0" y="2.3" font-size="6.5" font-weight="bold" fill="#e0141e" text-anchor="middle">-4000</text></g><g transform="translate(1234.7 632.5) rotate(-5)"><text x="0" y="2.3" font-size="6.5" font-weight="bold" fill="#e0141e" text-anchor="middle">-4000</text></g><g transform="translate(1087.7 644.0) rotate(-5)"><text x="0" y="2.3" font-size="6.5" font-weight="bold" fill="#e0141e" text-anchor="middle">-4000</text></g><g transform="translate(939.4 695.5) rotate(-5)"><text x="0" y="2.3" font-size="6.5" font-weight="bold" fill="#e0141e" text-anchor="middle">-4000</text></g><g transform="translate(865.0 778.0) rotate(-5)"><text x="0" y="2.3" font-size="6.5" font-weight="bold" fill="#e0141e" text-anchor="middle">-4000</text></g><g transform="translate(843.0 835.0) rotate(-5)"><text x="0" y="2.3" font-size="6.5" font-weight="bold" fill="#e0141e" text-anchor="middle">-4000</text></g><g transform="translate(657.7 367.6) rotate(-5)"><text x="0" y="2.3" font-size="6.5" font-weight="bold" fill="#e0141e" text-anchor="middle">-4000</text></g><g transform="translate(658.6 385.9) rotate(-5)"><text x="0" y="2.3" font-size="6.5" font-weight="bold" fill="#e0141e" text-anchor="middle">-4000</text></g><g transform="translate(663.4 411.0) rotate(-5)"><text x="0" y="2.3" font-size="6.5" font-weight="bold" fill="#e0141e" text-anchor="middle">-4000</text></g><g transform="translate(704.9 355.0) rotate(-5)"><text x="0" y="2.3" font-size="6.5" font-weight="bold" fill="#e0141e" text-anchor="middle">-4000</text></g><g transform="translate(713.6 377.1) rotate(-5)"><text x="0" y="2.3" font-size="6.5" font-weight="bold" fill="#e0141e" text-anchor="middle">-4000</text></g><g transform="translate(716.6 477.8) rotate(-5)"><text x="0" y="2.3" font-size="6.5" font-weight="bold" fill="#e0141e" text-anchor="middle">-4000</text></g><g transform="translate(1183.0 192.5) rotate(-17)"><rect x="-20" y="-4.6" width="41" height="9" rx="0.8" fill="none" stroke="#c8141c" stroke-width="1.2"/><text x="-17" y="3.2" font-size="8.5" font-weight="bold" fill="#fff" letter-spacing="0.6">4 р.л.</text></g><g transform="translate(1204.0 268.5) rotate(-17)"><rect x="-20" y="-4.6" width="41" height="9" rx="0.8" fill="none" stroke="#c8141c" stroke-width="1.2"/><text x="-17" y="3.2" font-size="8.5" font-weight="bold" fill="#fff" letter-spacing="0.6">3 р.л.</text></g><g transform="translate(1246.0 326.5) rotate(-22)"><rect x="-20" y="-4.6" width="41" height="9" rx="0.8" fill="none" stroke="#c8141c" stroke-width="1.2"/><text x="-17" y="3.2" font-size="8.5" font-weight="bold" fill="#fff" letter-spacing="0.6">2 р.л.</text></g><g transform="translate(1262.0 404.0) rotate(-22)"><rect x="-20" y="-4.6" width="41" height="9" rx="0.8" fill="none" stroke="#c8141c" stroke-width="1.2"/><text x="-17" y="3.2" font-size="8.5" font-weight="bold" fill="#fff" letter-spacing="0.6">1 р.л.</text></g><g fill="none" stroke="#fff">
<path d="M290.5 170.5h6.7v6.7h-6.7z" fill="#fff" stroke="none"/>
<path d="M286.6 167l3.2 3.2M286.6 169.6V167h2.6M300.8 167l-3.2 3.2M300.8 169.6V167h-2.6M286.6 180.6l3.2-3.2M286.6 178v2.6h2.6M300.8 180.6l-3.2-3.2M300.8 178v2.6h-2.6" stroke-width="1.6"/>
<path d="M286.3 201.5v-2.3q0-1.4 1.4-1.4h2.3M297.4 197.8h2.3q1.4 0 1.4 1.4v2.3M301.1 208.4v2.3q0 1.4-1.4 1.4h-2.3M290 212.1h-2.3q-1.4 0-1.4-1.4v-2.3" stroke-width="1.6"/>
<rect x="289.6" y="201.6" width="8.3" height="7.1" rx="1" stroke-width="1.5"/>
<path d="M292.3 233.5l3.2 3.3-3.2 3.3M292.3 389.6l3.2 3.3-3.2 3.3" stroke-width="1.1"/>
</g><path d="M293.6 258.8 L301.8 263.4 L293.6 268.0 L285.4 263.4Z" fill="#fff"/><path d="M293.6 258.8 L301.8 263.4 L301.8 272.6 L293.6 277.2 L285.4 272.6 L285.4 263.4Z M285.4 263.4 L293.6 268.0 L301.8 263.4 M293.6 268.0 V277.2" fill="none" stroke="#fff" stroke-width="1.6" stroke-linejoin="round"/><path d="M293.6 299.6 L301.8 295.0 L301.8 304.2 L293.6 308.8Z" fill="#fff"/><path d="M293.6 290.4 L301.8 295.0 L301.8 304.2 L293.6 308.8 L285.4 304.2 L285.4 295.0Z M285.4 295.0 L293.6 299.6 L301.8 295.0 M293.6 299.6 V308.8" fill="none" stroke="#fff" stroke-width="1.6" stroke-linejoin="round"/><path d="M293.6 331.0 L293.6 340.2 L285.4 335.6 L285.4 326.4Z" fill="#fff"/><path d="M293.6 321.8 L301.8 326.4 L301.8 335.6 L293.6 340.2 L285.4 335.6 L285.4 326.4Z M285.4 326.4 L293.6 331.0 L301.8 326.4 M293.6 331.0 V340.2" fill="none" stroke="#fff" stroke-width="1.6" stroke-linejoin="round"/><g fill="none" stroke="#fff" stroke-width="1.5">
<path d="M285 357.5v-2q0-1 1-1h2.2M298.8 354.5h2.2q1 0 1 1v2M302 366.5v2q0 1-1 1h-2.2M288.2 369.5h-2.2q-1 0-1-1v-2"/>
<path d="M293.6 356.5l4.6 2.6v5.4l-4.6 2.6-4.6-2.6v-5.4zM289 359.1l4.6 2.6 4.6-2.6M293.6 361.7v5.4" stroke-width="1.2" stroke-linejoin="round"/>
</g><rect x="285.6" y="415.9" width="16.3" height="16.3" rx="1.8" fill="#e5103c"/><rect x="287.9" y="418.2" width="2.9" height="2.9" fill="#1c2b31"/><rect x="287.9" y="422.7" width="2.9" height="2.9" fill="#1c2b31"/><rect x="287.9" y="427.2" width="2.9" height="2.9" fill="#1c2b31"/><rect x="292.4" y="418.2" width="2.9" height="2.9" fill="#1c2b31"/><rect x="292.4" y="422.7" width="2.9" height="2.9" fill="#1c2b31"/><rect x="292.4" y="427.2" width="2.9" height="2.9" fill="#1c2b31"/><rect x="296.9" y="418.2" width="2.9" height="2.9" fill="#1c2b31"/><rect x="296.9" y="422.7" width="2.9" height="2.9" fill="#1c2b31"/><rect x="296.9" y="427.2" width="2.9" height="2.9" fill="#1c2b31"/><rect x="285.6" y="447.2" width="16.3" height="16.3" rx="1.8" fill="#20dd34"/><rect x="287.9" y="449.5" width="2.9" height="2.9" fill="#1c2b31"/><rect x="287.9" y="454.0" width="2.9" height="2.9" fill="#1c2b31"/><rect x="287.9" y="458.5" width="2.9" height="2.9" fill="#1c2b31"/><rect x="292.4" y="449.5" width="2.9" height="2.9" fill="#1c2b31"/><rect x="292.4" y="454.0" width="2.9" height="2.9" fill="#1c2b31"/><rect x="292.4" y="458.5" width="2.9" height="2.9" fill="#1c2b31"/><rect x="296.9" y="449.5" width="2.9" height="2.9" fill="#1c2b31"/><rect x="296.9" y="454.0" width="2.9" height="2.9" fill="#1c2b31"/><rect x="296.9" y="458.5" width="2.9" height="2.9" fill="#1c2b31"/><rect x="285.6" y="478.4" width="16.3" height="16.3" rx="1.8" fill="#1a5de0"/><rect x="287.9" y="480.7" width="2.9" height="2.9" fill="#1c2b31"/><rect x="287.9" y="485.2" width="2.9" height="2.9" fill="#1c2b31"/><rect x="287.9" y="489.7" width="2.9" height="2.9" fill="#1c2b31"/><rect x="292.4" y="480.7" width="2.9" height="2.9" fill="#1c2b31"/><rect x="292.4" y="485.2" width="2.9" height="2.9" fill="#1c2b31"/><rect x="292.4" y="489.7" width="2.9" height="2.9" fill="#1c2b31"/><rect x="296.9" y="480.7" width="2.9" height="2.9" fill="#1c2b31"/><rect x="296.9" y="485.2" width="2.9" height="2.9" fill="#1c2b31"/><rect x="296.9" y="489.7" width="2.9" height="2.9" fill="#1c2b31"/><rect x="285.8" y="510.3" width="16" height="16.2" rx="1.5" fill="#fff"/><path d="M288.5 524 L299 513 V524 Z" fill="#1c2b31"/><path d="M328.3 798 V838.5" stroke="#3a88d8" stroke-width="1.2"/><path d="M288 839.2 H328.5" stroke="#d4801e" stroke-width="1.4"/></g></svg><!-- right panel -->
<div class="t" style="left:1422px;top:168.3px;font-size:12px;font-weight:bold;color:#3a3d42">Информация о файле</div>
<svg style="left:1624px;top:168px" width="14" height="13" viewBox="0 0 14 13" stroke="#333" stroke-width="1.6" stroke-linecap="round"><path d="M2.5 2 L11.5 11 M11.5 2 L2.5 11"/></svg>
<svg style="left:1427px;top:201px" width="37" height="50" viewBox="0 0 37 50">
 <path d="M2.3 2.3 H23.8 L34.5 13.3 V47 Q34.5 47.6 33.9 47.6 H2.9 Q2.3 47.6 2.3 47 Z" fill="#fff" stroke="#000" stroke-width="1.9" stroke-linejoin="round"/>
 <path d="M23.3 1.5 L35.3 13.6 H23.3 Z" fill="#000"/>
 <rect x="2" y="33" width="33" height="15.3" rx="0.8" fill="#000"/>
 <path d="M8.3 23.4 L13.6 9.7 H20.9 L28 28.2 H23 L17 12.5 L12.2 24.6 L18.8 25.2 L10 28.6 Z" fill="#000"/>
 <text x="18.5" y="46" font-size="12.5" font-weight="bold" fill="#fff" text-anchor="middle" font-family="Liberation Sans" letter-spacing="-0.3">DXF</text>
</svg>
<div class="t" style="left:1475px;top:212.7px;font-size:11.5px;color:#555">2021 план.DXF</div>
<div class="t" style="left:1475px;top:228px;font-size:9.5px;color:#7a7a7a">dxf</div>
<svg style="left:1615px;top:216px" width="19" height="19" viewBox="0 0 19 19" fill="none" stroke-linejoin="round" stroke-linecap="round"><path d="M3.2 16 L2.6 13.3 L12.3 3.6 L15 6.3 L5.3 16 Z" stroke="#333" stroke-width="1.4"/><path d="M13.1 2.8 Q14 1.9 14.9 2.8 L15.8 3.7 Q16.7 4.6 15.8 5.5" stroke="#4a7bd0" stroke-width="1.6"/></svg>
<div class="t" style="left:1422px;top:289px;font-size:10.5px;font-weight:bold;color:#3a3d42">Спецификация файла</div>
<div class="t" style="left:1422px;top:310px;font-size:11px;color:#555">Размер файла</div>
<div class="t" style="left:1422px;top:335px;font-size:11px;color:#555">Кем изменено</div>
<div class="t" style="left:1422px;top:360px;font-size:11px;color:#555">Когда изменено</div>
<div class="a" style="left:1578px;top:306.3px;width:53px;height:18px;border-radius:9px;background:#2c4a7a"></div>
<div class="t" style="left:1578px;top:310.8px;width:53px;text-align:center;font-size:9.5px;color:#fff">1.57 МБ</div>
<div class="a" style="left:1541.5px;top:331.5px;width:89.5px;height:18.5px;border-radius:9px;background:#2c4a7a"></div>
<div class="t" style="left:1541.5px;top:336px;width:89.5px;text-align:center;font-size:9.5px;color:#fff">Григоровский И.</div>
<div class="a" style="left:1530px;top:356.5px;width:101px;height:18.5px;border-radius:9px;background:#2c4a7a"></div>
<div class="t" style="left:1530px;top:361px;width:101px;text-align:center;font-size:9.5px;color:#fff">16.09.2024 в 16:29</div>
<div class="t" style="left:1422px;top:404px;font-size:10.5px;font-weight:bold;color:#3a3d42">Теги</div>
<svg style="left:1606px;top:401px" width="19" height="18" viewBox="0 0 19 18" fill="none" stroke-linejoin="round" stroke-linecap="round"><path d="M3.2 15.5 L2.6 12.8 L12.3 3.1 L15 5.8 L5.3 15.5 Z" stroke="#333" stroke-width="1.4"/><path d="M13.1 2.3 Q14 1.4 14.9 2.3 L15.8 3.2 Q16.7 4.1 15.8 5" stroke="#4a7bd0" stroke-width="1.6"/></svg>
<div class="t" style="left:1422px;top:432.5px;font-size:9.3px;line-height:14.1px;color:#b9bcc0">Добавьте теги к этой файлу. Теги упрощают<br>вам и вашей команде организацию,<br>управление и поиск файлов.</div>
<div class="a" style="left:1422px;top:480px;width:141px;height:18.5px;border-radius:9.5px;border:1px solid #d6d8da"></div>
<div class="t" style="left:1431px;top:485px;font-size:9.5px;color:#444">Векторная графика</div>
<div class="a" style="left:1524.5px;top:480px;width:38.5px;height:18.5px;border-radius:9.5px;background:#2c4a7a"></div>
<div class="t" style="left:1524.5px;top:484.5px;width:38.5px;text-align:center;font-size:9.5px;color:#fff">план</div>
<div class="t" style="left:1422px;top:528px;font-size:10.5px;font-weight:bold;color:#3a3d42">Разрешения</div>
<svg style="left:1606px;top:524px" width="19" height="18" viewBox="0 0 19 18" fill="none" stroke-linejoin="round" stroke-linecap="round"><path d="M3.2 15.5 L2.6 12.8 L12.3 3.1 L15 5.8 L5.3 15.5 Z" stroke="#333" stroke-width="1.4"/><path d="M13.1 2.3 Q14 1.4 14.9 2.3 L15.8 3.2 Q16.7 4.1 15.8 5" stroke="#4a7bd0" stroke-width="1.6"/></svg>
<!-- permission rows -->
<svg style="left:1422px;top:563px" width="15" height="15" viewBox="0 0 15 15"><circle cx="7.5" cy="7.5" r="7.3" fill="#ddd6d0"/><ellipse cx="7.6" cy="7.2" rx="4.3" ry="5.4" fill="#6b4b3c"/><path d="M2.5 15 Q7.5 9.5 12.5 15 Z" fill="#3a3330"/><ellipse cx="7.6" cy="3.2" rx="4" ry="2" fill="#3b2a24"/></svg>
<div class="t" style="left:1446px;top:566px;font-size:9.5px;color:#555">Невлютов Т.</div>
<div class="a" style="left:1422px;top:603px;width:15.4px;height:15.4px;border-radius:50%;background:#2c4a7e"></div>
<div class="t" style="left:1423.3px;top:606.5px;font-size:9px;color:#fff;letter-spacing:-0.5px">ГИ</div>
<div class="t" style="left:1446px;top:607px;font-size:9.5px;color:#555">Григоровский И.</div>
<svg style="left:1422px;top:644px" width="15" height="15" viewBox="0 0 15 15"><circle cx="7.5" cy="7.5" r="7.3" fill="#dcdde2"/><path d="M1.3 12 Q3 9 7.5 9.2 Q12 9 13.7 12 Q11.5 15 7.5 15 Q3.5 15 1.3 12 Z" fill="#2e4f92"/><ellipse cx="7.5" cy="5.5" rx="2.6" ry="3.3" fill="#b98a74"/><path d="M7 9.3 L8 9.3 L7.8 13 L7.2 13 Z" fill="#8a2a2a"/></svg>
<div class="t" style="left:1446px;top:647px;font-size:9.5px;color:#555">Яремченко Т.</div>
<div class="a" style="left:1571px;top:561.5px;width:23px;height:19px;border-radius:9.5px;background:#2c4a7a"></div>
<div class="t" style="left:1571px;top:566px;width:23px;text-align:center;font-size:9.5px;color:#fff">4</div>
<div class="a" style="left:1571px;top:601.5px;width:23px;height:19px;border-radius:9.5px;background:#2c4a7a"></div>
<div class="t" style="left:1571px;top:606px;width:23px;text-align:center;font-size:9.5px;color:#fff">4</div>
<div class="a" style="left:1571px;top:642px;width:23px;height:19px;border-radius:9.5px;background:#2c4a7a"></div>
<div class="t" style="left:1571px;top:646.5px;width:23px;text-align:center;font-size:9.5px;color:#fff">7</div>
<svg style="left:1610px;top:564px" width="10" height="94" viewBox="0 0 10 94" fill="none" stroke="#333" stroke-width="1.3" stroke-linecap="round" stroke-linejoin="round"><path d="M3.5 3.5 L6.8 6.8 L3.5 10.1 M3.5 44 L6.8 47.3 L3.5 50.6 M3.5 84.5 L6.8 87.8 L3.5 91.1"/></svg>
</body></html>
